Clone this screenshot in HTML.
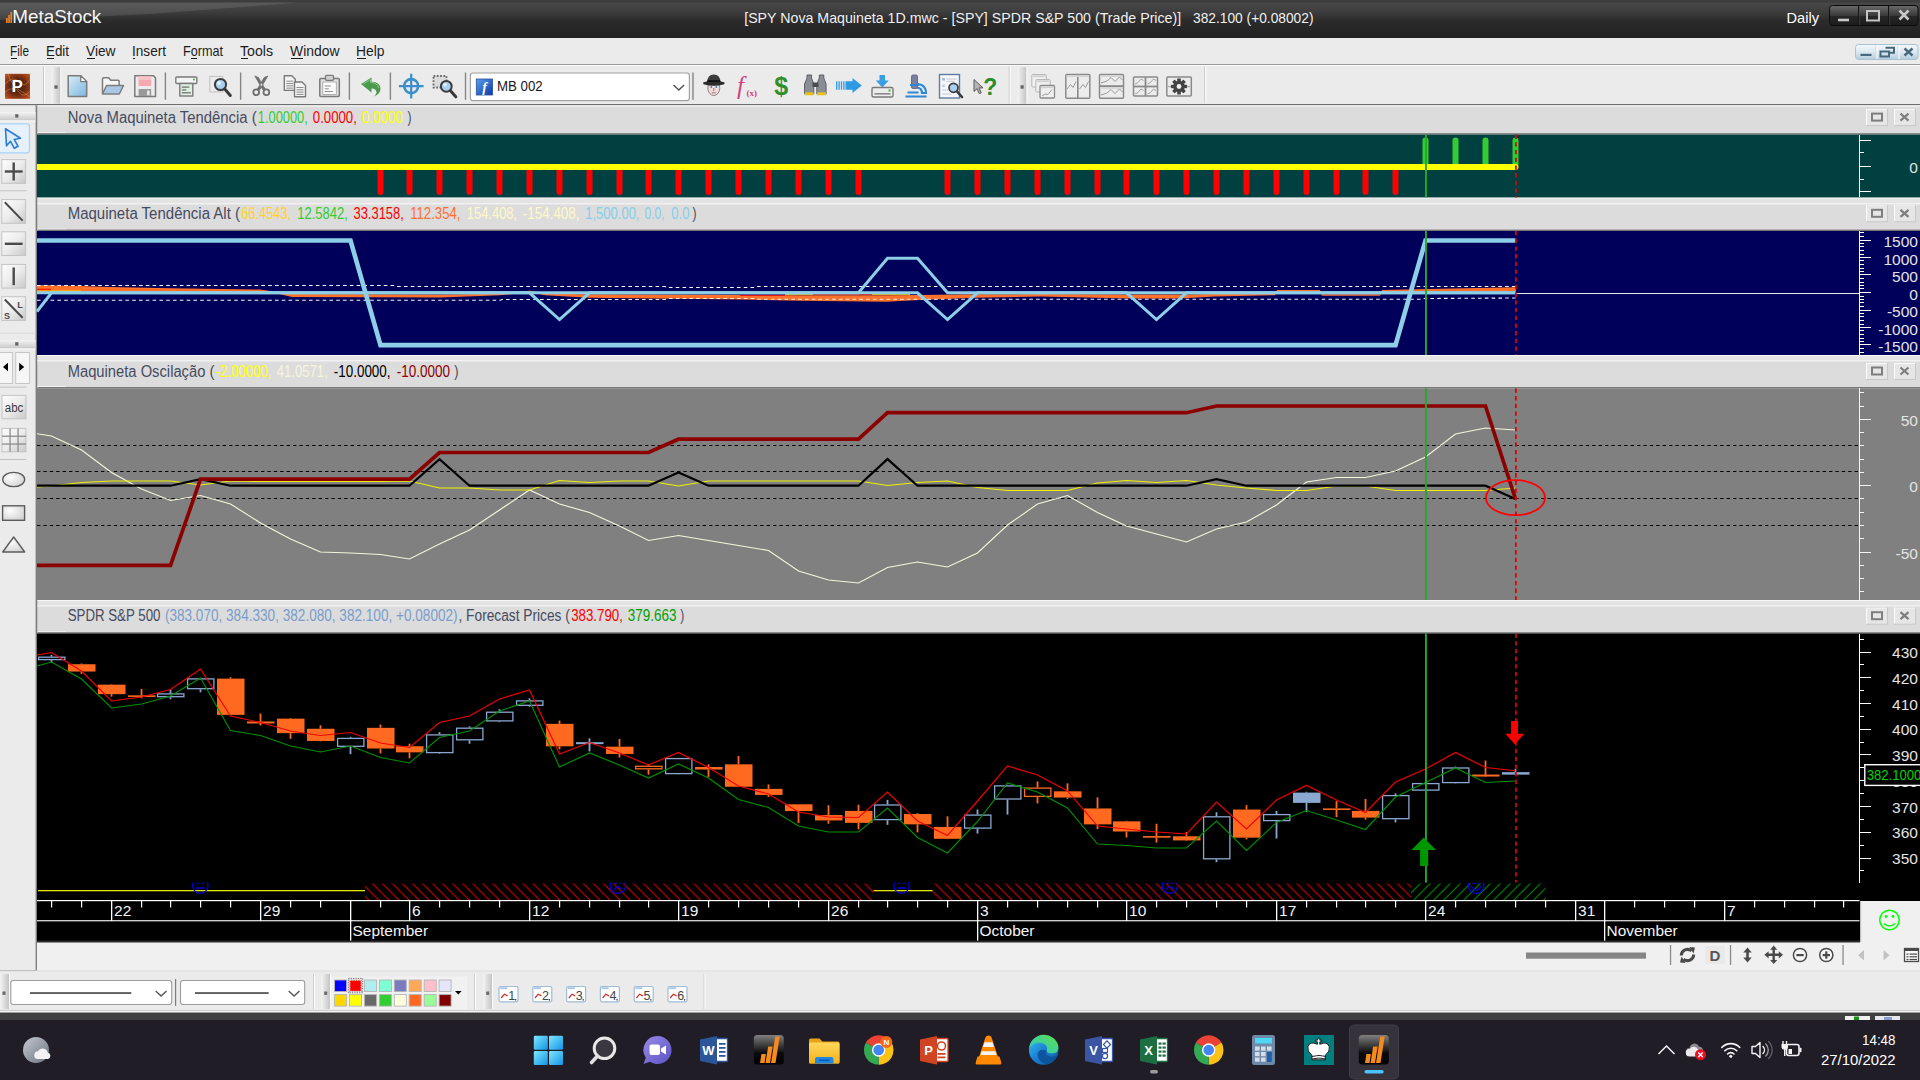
<!DOCTYPE html><html lang="en"><head><meta charset="utf-8"><title>MetaStock</title><style>html,body{margin:0;padding:0;background:#f0f0f0;overflow:hidden}svg{display:block;position:absolute;left:0;top:0}text{font-family:"Liberation Sans",sans-serif;white-space:pre}.ce{shape-rendering:crispEdges}</style></head><body><svg width="1920" height="1080" viewBox="0 0 1920 1080"><defs><linearGradient id="gTitle" x1="0" y1="0" x2="0" y2="1"><stop offset="0" stop-color="#4b4b4b"/><stop offset="0.3" stop-color="#3e3e3e"/><stop offset="0.55" stop-color="#2b2b2b"/><stop offset="1" stop-color="#222222"/></linearGradient><linearGradient id="gWB" x1="0" y1="0" x2="0" y2="1"><stop offset="0" stop-color="#6a6a6a"/><stop offset="0.5" stop-color="#3a3a3a"/><stop offset="0.55" stop-color="#262626"/><stop offset="1" stop-color="#1c1c1c"/></linearGradient><linearGradient id="gMDI" x1="0" y1="0" x2="0" y2="1"><stop offset="0" stop-color="#f4f8fb"/><stop offset="0.5" stop-color="#dde8f0"/><stop offset="1" stop-color="#b4ccdc"/></linearGradient><linearGradient id="gGrip" x1="0" y1="0" x2="1" y2="0"><stop offset="0" stop-color="#f4f4f4"/><stop offset="1" stop-color="#c4c4c4"/></linearGradient><linearGradient id="gGripV" x1="0" y1="0" x2="0" y2="1"><stop offset="0" stop-color="#f4f4f4"/><stop offset="1" stop-color="#c8c8c8"/></linearGradient><linearGradient id="gBtn" x1="0" y1="0" x2="0" y2="1"><stop offset="0" stop-color="#fafafa"/><stop offset="1" stop-color="#d8d8d8"/></linearGradient><linearGradient id="gDoc" x1="0" y1="0" x2="1" y2="1"><stop offset="0" stop-color="#d8ecf8"/><stop offset="1" stop-color="#7cb8e0"/></linearGradient><radialGradient id="gP" cx="0.5" cy="0.5" r="0.75"><stop offset="0" stop-color="#3a1a10"/><stop offset="0.45" stop-color="#6a2810"/><stop offset="0.8" stop-color="#b04a1c"/><stop offset="1" stop-color="#d8742c"/></radialGradient><pattern id="hRed" width="10.05" height="10.05" patternUnits="userSpaceOnUse" patternTransform="translate(1.3 0)"><path d="M-1,-1 L11,11 M-1,9 L1,11 M9,-1 L11,1" stroke="#e00000" stroke-width="1.05"/></pattern><pattern id="hGrn" width="10" height="10" patternUnits="userSpaceOnUse" patternTransform="translate(3.8 0)"><path d="M-1,11 L11,-1 M-1,1 L1,-1 M9,11 L11,9" stroke="#008c00" stroke-width="1.1"/></pattern></defs><rect x="0" y="0" width="1920" height="1080" fill="#f0f0f0" /><rect x="0" y="0" width="1920" height="38" fill="url(#gTitle)" /><rect x="0" y="0" width="1920" height="2.6" fill="#3d3d3d" /><polygon points="0,2.6 300,2.6 150,14 60,18.500 0,20" fill="#ffffff" opacity="0.10"/><rect x="6" y="18" width="1.7" height="5" fill="#f08020" /><rect x="8.2" y="15" width="1.7" height="8" fill="#f08020" /><rect x="10.4" y="12" width="1.7" height="11" fill="#f08020" /><text x="12.3" y="22.9" font-size="19" fill="#f6f6f6" textLength="89" lengthAdjust="spacingAndGlyphs" >MetaStock</text><text x="744.2" y="22.8" font-size="15" fill="#f0f0f0" textLength="437" lengthAdjust="spacingAndGlyphs" >[SPY Nova Maquineta 1D.mwc - [SPY] SPDR S&amp;P 500 (Trade Price)]</text><text x="1193" y="22.8" font-size="15" fill="#f0f0f0" textLength="120.5" lengthAdjust="spacingAndGlyphs" >382.100 (+0.08002)</text><text x="1786.5" y="22.5" font-size="15" fill="#ffffff" textLength="32.5" lengthAdjust="spacingAndGlyphs" >Daily</text><rect x="1829.5" y="5.5" width="88.5" height="20" rx="3" fill="url(#gWB)" stroke="#0c0c0c"/><line x1="1858.5" y1="6" x2="1858.5" y2="25" stroke="#141414" stroke-width="1" /><line x1="1859.5" y1="6" x2="1859.5" y2="25" stroke="#4a4a4a" stroke-width="1" opacity="0.6"/><line x1="1888.5" y1="6" x2="1888.5" y2="25" stroke="#141414" stroke-width="1" /><line x1="1889.5" y1="6" x2="1889.5" y2="25" stroke="#4a4a4a" stroke-width="1" opacity="0.6"/><rect x="1838" y="18.7" width="11" height="2.6" fill="#c8c8c8" /><rect x="1867" y="11" width="12" height="9.5" fill="none" stroke="#c4c4c4" stroke-width="2"/><path d="M1899.5,10.5 L1908.5,19.5 M1908.5,10.5 L1899.5,19.5" stroke="#c8c8c8" stroke-width="2.6"/><rect x="0" y="38" width="1920" height="26" fill="#ebebeb" /><rect x="0" y="64" width="1920" height="1" fill="#9a9a9a" class="ce"/><rect x="0" y="65" width="1920" height="1" fill="#fafafa" class="ce"/><text x="10" y="56" font-size="15" fill="#1c1c1c" textLength="19" lengthAdjust="spacingAndGlyphs" >File</text><rect x="10.5" y="58" width="6.20181" height="1" fill="#1c1c1c" class="ce"/><text x="46" y="56" font-size="15" fill="#1c1c1c" textLength="23" lengthAdjust="spacingAndGlyphs" >Edit</text><rect x="46.5" y="58" width="7.89964" height="1" fill="#1c1c1c" class="ce"/><text x="86" y="56" font-size="15" fill="#1c1c1c" textLength="29.5" lengthAdjust="spacingAndGlyphs" >View</text><rect x="86.5" y="58" width="8.15172" height="1" fill="#1c1c1c" class="ce"/><text x="132" y="56" font-size="15" fill="#1c1c1c" textLength="34" lengthAdjust="spacingAndGlyphs" >Insert</text><rect x="132.5" y="58" width="2.77935" height="1" fill="#1c1c1c" class="ce"/><text x="183" y="56" font-size="15" fill="#1c1c1c" textLength="40" lengthAdjust="spacingAndGlyphs" >Format</text><rect x="191.208" y="58" width="6.02401" height="1" fill="#1c1c1c" class="ce"/><text x="240" y="56" font-size="15" fill="#1c1c1c" textLength="33" lengthAdjust="spacingAndGlyphs" >Tools</text><rect x="240.5" y="58" width="7.62918" height="1" fill="#1c1c1c" class="ce"/><text x="290" y="56" font-size="15" fill="#1c1c1c" textLength="49.5" lengthAdjust="spacingAndGlyphs" >Window</text><rect x="290.5" y="58" width="12.1362" height="1" fill="#1c1c1c" class="ce"/><text x="356" y="56" font-size="15" fill="#1c1c1c" textLength="28.5" lengthAdjust="spacingAndGlyphs" >Help</text><rect x="356.5" y="58" width="9.00532" height="1" fill="#1c1c1c" class="ce"/><rect x="1855.5" y="44.5" width="62.5" height="15" rx="3" fill="url(#gMDI)" stroke="#a9c3d4"/><line x1="1876" y1="45" x2="1876" y2="59" stroke="#c5d6e2" stroke-width="1" /><line x1="1877" y1="45" x2="1877" y2="59" stroke="#ffffff" stroke-width="1" /><line x1="1898" y1="45" x2="1898" y2="59" stroke="#c5d6e2" stroke-width="1" /><line x1="1899" y1="45" x2="1899" y2="59" stroke="#ffffff" stroke-width="1" /><rect x="1860.5" y="53.8" width="11" height="2.2" fill="#47697e" /><path d="M1885.5,47.7 h8.5 v5 h-4 M1880.5,51.5 h8.5 v5 h-8.5 z" fill="none" stroke="#47697e" stroke-width="2"/><path d="M1904.5,48.5 L1912.5,55.5 M1912.5,48.5 L1904.5,55.5" stroke="#47697e" stroke-width="2.4"/><rect x="0" y="66" width="1920" height="38" fill="#ebebeb" /><rect x="0" y="104" width="1920" height="1.4" fill="#6e6e6e" /><rect x="5" y="73.800" width="25" height="25" fill="url(#gP)"/><path d="M5,84 q8,-9 14,-2 t11,-3 M5,92 q9,-7 14,0 t11,-1 M8,73.800 q3,12 14,18 t8,6" fill="none" stroke="#f0a060" stroke-width="0.800" opacity="0.550"/><text x="17.8" y="92.3" font-size="17" fill="#201008" text-anchor="middle" font-weight="bold" opacity="0.6">P</text><text x="17.2" y="91.5" font-size="17" fill="#ffffff" text-anchor="middle" font-weight="bold">P</text><rect x="43" y="66.5" width="1" height="37" fill="#c8c8c8" /><rect x="44" y="66.5" width="1" height="37" fill="#fcfcfc" /><rect x="51.4" y="67" width="9" height="36.800" fill="url(#gGrip)"/><rect x="60.4" y="67" width="1" height="36.8" fill="#fbfbfb" /><rect x="54.4" y="85.3" width="3.2" height="3.4" fill="#666666" /><path d="M68.200,75.700 h12.500 l6,6 v14.800 h-18.500 z" fill="url(#gDoc)" stroke="#7a7a7a" stroke-width="1.500" stroke-linejoin="round"/><path d="M80.700,75.700 v6 h6 z" fill="#fafafa" stroke="#7a7a7a" stroke-width="1.200" stroke-linejoin="round"/><path d="M102.500,93.500 v-14.500 q0,-1.200 1.200,-1.200 h5 l2,2.500 h7.300 q1.200,0 1.200,1.200 v4" fill="#f6f6f6" stroke="#7d7d7d" stroke-width="1.500" stroke-linejoin="round"/><path d="M102.500,94 l4,-8.500 h17 l-4.200,8.500 z" fill="#a9c8e6" stroke="#7d7d7d" stroke-width="1.500" stroke-linejoin="round"/><path d="M134.800,75.700 h18.700 l2,2 v18.800 h-20.700 z" fill="#ececec" stroke="#7a7a7a" stroke-width="1.500" stroke-linejoin="round"/><rect x="138.6" y="76.4" width="12.6" height="9.6" fill="#f6a8b0" /><rect x="138.6" y="76.4" width="12.6" height="3.5" fill="#f9c4c8" /><rect x="138.6" y="89" width="12.6" height="7" fill="#9a9a9a" /><rect x="147" y="90.5" width="2.6" height="4.8" fill="#e8e8e8" /><rect x="164.7" y="72.5" width="1.4" height="27.3" fill="#858585" /><rect x="175.800" y="77" width="21" height="6.500" rx="1" fill="#f4f4f4" stroke="#7a7a7a" stroke-width="1.400"/><rect x="193" y="78.6" width="1.8" height="1.8" fill="#46b446" /><rect x="179.800" y="83.500" width="13" height="12.500" fill="#ddf0e0" stroke="#7a7a7a" stroke-width="1.400"/><rect x="181.8" y="86.5" width="7.5" height="1.2" fill="#6a6a6a" /><rect x="181.8" y="89.3" width="4.5" height="1.2" fill="#6a6a6a" /><rect x="181.8" y="92.2" width="9" height="1.2" fill="#6a6a6a" /><rect x="209.800" y="76.400" width="13" height="15.500" fill="#ececec" stroke="#c0c0c0" stroke-width="1"/><circle cx="220.500" cy="84.500" r="5.600" fill="#a8d0f0" stroke="#3c3c3c" stroke-width="2"/><circle cx="219" cy="83" r="2" fill="#e4f2fc"/><path d="M224.800,89 l5.500,6.500" stroke="#3a3a3a" stroke-width="3" stroke-linecap="round"/><rect x="239.9" y="72.5" width="1.4" height="27.3" fill="#858585" /><path d="M254.800,76 l3.600,1.500 l6.800,11.500 l-2.200,1 z M267.800,76 l-3.600,1.500 l-6.800,11.500 l2.200,1 z" fill="#707070" stroke="#707070" stroke-width="0.800" stroke-linejoin="round"/><circle cx="256.200" cy="92.300" r="2.900" fill="none" stroke="#6e6e6e" stroke-width="1.800"/><circle cx="266.400" cy="92.300" r="2.900" fill="none" stroke="#6e6e6e" stroke-width="1.800"/><path d="M284.3,75.7 h7.500 l3.500,3.500 v11.200 h-11 z" fill="#f4f4f4" stroke="#7a7a7a" stroke-width="1.400" stroke-linejoin="round"/><rect x="286.3" y="80.7" width="7" height="1" fill="#8c8c8c" /><rect x="286.3" y="83" width="7" height="1" fill="#8c8c8c" /><rect x="286.3" y="85.3" width="7" height="1" fill="#8c8c8c" /><rect x="286.3" y="87.6" width="7" height="1" fill="#8c8c8c" /><path d="M294.5,82 h7.500 l3.500,3.500 v11.200 h-11 z" fill="#f4f4f4" stroke="#7a7a7a" stroke-width="1.400" stroke-linejoin="round"/><rect x="296.5" y="87" width="7" height="1" fill="#8c8c8c" /><rect x="296.5" y="89.3" width="7" height="1" fill="#8c8c8c" /><rect x="296.5" y="91.6" width="7" height="1" fill="#8c8c8c" /><rect x="296.5" y="93.9" width="7" height="1" fill="#8c8c8c" /><rect x="319.800" y="78.500" width="19.500" height="18" rx="1" fill="#e2e2e2" stroke="#7a7a7a" stroke-width="1.500"/><rect x="322.800" y="82" width="13.500" height="12.500" fill="#fbfbfb" stroke="#a0a0a0" stroke-width="0.800"/><rect x="325.500" y="75.300" width="8" height="5" rx="1" fill="#d0d0d0" stroke="#7a7a7a" stroke-width="1.300"/><rect x="324.8" y="85.5" width="6" height="1" fill="#8c8c8c" /><rect x="324.8" y="88.3" width="4" height="1" fill="#8c8c8c" /><rect x="324.8" y="91" width="8" height="1" fill="#8c8c8c" /><rect x="348.7" y="72.5" width="1.4" height="27.3" fill="#858585" /><path d="M361,84 l10.500,-6.500 v4.200 q9,0.300 9,7.300 q0,5 -6.500,7.500 q3.200,-3 2.200,-5.500 q-1,-2.800 -4.700,-2.600 v4 z" fill="#4c9a4c"/><path d="M363.500,83.800 l7,-4.200 v2.800 q7.500,0.500 8,5.500" fill="none" stroke="#8cc88c" stroke-width="1"/><rect x="389.7" y="72.5" width="1.4" height="27.3" fill="#858585" /><circle cx="411.200" cy="86.100" r="7" fill="#f1e6ee" stroke="#3b8fc9" stroke-width="2.600"/><path d="M398.900,86.100 h24.700 M411.200,73.800 v24.700" stroke="#3b8fc9" stroke-width="2.200"/><rect x="433.500" y="76" width="13" height="11.500" fill="#dcdcdc" stroke="#6c6c6c" stroke-width="1.800" stroke-dasharray="1.800,1.500"/><circle cx="446.300" cy="86.300" r="5.400" fill="#a8d0f0" stroke="#3c3c3c" stroke-width="2"/><circle cx="445" cy="84.800" r="1.800" fill="#e4f2fc"/><path d="M450.500,90.800 l5.300,6" stroke="#3a3a3a" stroke-width="3" stroke-linecap="round"/><rect x="464.8" y="72.5" width="1.4" height="27.3" fill="#858585" /><rect x="470.400" y="73" width="219" height="27.600" rx="2.500" fill="#ffffff" stroke="#a2a2a2" stroke-width="1.200"/><linearGradient id="gF" x1="0" y1="0" x2="1" y2="1"><stop offset="0" stop-color="#5aa0ea"/><stop offset="1" stop-color="#0c38a8"/></linearGradient><rect x="476.300" y="79" width="16.300" height="16" fill="url(#gF)" stroke="#2a50a0" stroke-width="0.800"/><text x="484.5" y="92" font-size="14" fill="#ffffff" text-anchor="middle" font-style="italic" font-weight="bold" style="font-family:Liberation Serif,serif">f</text><text x="497" y="91.2" font-size="15" fill="#1a1a1a" textLength="45.7" lengthAdjust="spacingAndGlyphs" >MB 002</text><path d="M673.500,85 l5.300,5 l5.300,-5" fill="none" stroke="#505050" stroke-width="1.400"/><rect x="692.3" y="72.5" width="1.4" height="27.3" fill="#858585" /><ellipse cx="713.800" cy="88" rx="6" ry="7.500" fill="#f0dcd8" stroke="#7a6a6a" stroke-width="0.800"/><path d="M703,82.500 q10.800,-4 21.700,0 l-0.500,1.800 q-10.300,3 -20.700,0 z" fill="#2a2a2a"/><path d="M707.300,82 q0,-7.500 6.500,-7.500 q6.500,0 6.500,7.500 z" fill="#3c3c3c"/><rect x="707.3" y="80.2" width="13" height="1.8" fill="#101010" /><circle cx="711.300" cy="87" r="0.900" fill="#3c78c8"/><circle cx="716.300" cy="87" r="0.900" fill="#3c78c8"/><path d="M713.800,88 v3 M711.800,92.800 h4" stroke="#806060" stroke-width="0.800"/><text x="737" y="94" font-size="25" fill="#d2407e" font-style="italic" style="font-family:Liberation Serif,serif">f</text><text x="746.5" y="95.5" font-size="9" fill="#d2407e" font-weight="bold" style="font-family:Liberation Serif,serif">(x)</text><text x="781.3" y="95.3" font-size="25" fill="#2f8f2f" text-anchor="middle" font-weight="bold">$</text><path d="M804.5,94 v-10 l2.500,-6 v-3 h4.500 v3 l2.300,6 v10 z" fill="#8a8e92" stroke="#55585c" stroke-width="0.900"/><rect x="804.8" y="92.3" width="8.8" height="3" fill="#e8c020" /><path d="M816.8,94 v-10 l2.500,-6 v-3 h4.500 v3 l2.300,6 v10 z" fill="#8a8e92" stroke="#55585c" stroke-width="0.900"/><rect x="817.1" y="92.3" width="8.8" height="3" fill="#e8c020" /><rect x="812.5" y="82.5" width="6" height="4.5" fill="#4a4c50" /><rect x="836" y="81.3" width="1.4" height="8.4" fill="#3ca0e4" /><rect x="838.4" y="81.3" width="1.4" height="8.4" fill="#3ca0e4" /><rect x="840.8" y="81.3" width="1.4" height="8.4" fill="#3ca0e4" /><rect x="843.2" y="81.3" width="1.4" height="8.4" fill="#3ca0e4" /><path d="M845.500,81.300 h7 v-3.300 l9.300,7.500 l-9.300,7.500 v-3.300 h-7 z" fill="#2f9ae2"/><path d="M879.500,75 h5.500 v5.500 h3.800 l-6.500,7 l-6.500,-7 h3.700 z" fill="#3a9ee4"/><rect x="872" y="87.500" width="21" height="9.500" rx="1.500" fill="#ececec" stroke="#7a7a7a" stroke-width="1.400"/><rect x="874.5" y="93" width="16" height="1.6" fill="#8a8a8a" /><rect x="888.5" y="89.5" width="2" height="2" fill="#46b446" /><rect x="911.500" y="75" width="6" height="13.500" rx="1.500" fill="#7a80a0" stroke="#565a7a" stroke-width="0.800"/><path d="M910,85 h9 M918,84 q8,1 8,9 h-4 q0,-5 -5,-5.500" fill="none" stroke="#2f86d6" stroke-width="2.200"/><path d="M907.500,92.500 h11 M905.500,96.500 h21" stroke="#2f86d6" stroke-width="2.200"/><rect x="939.500" y="74.500" width="20" height="23.500" fill="#f6f8fb" stroke="#5c7ea6" stroke-width="1.400"/><rect x="942" y="78" width="3" height="2.6" fill="#a8bcd8" /><rect x="946.5" y="78.5" width="10.5" height="1" fill="#c0c8d4" /><rect x="946.5" y="80.8" width="8" height="1" fill="#c0c8d4" /><rect x="942" y="84.5" width="3" height="2.6" fill="#c8d0dc" /><rect x="942" y="89.5" width="6" height="1" fill="#c0c8d4" /><rect x="942" y="93.5" width="9" height="1" fill="#c0c8d4" /><circle cx="953.500" cy="87.800" r="4.500" fill="#a8d0f0" stroke="#3c3c3c" stroke-width="1.700"/><path d="M957,91.500 l5,5.500" stroke="#3a3a3a" stroke-width="2.600" stroke-linecap="round"/><path d="M974,79.500 v12 l3,-2.800 l2.300,5 l2,-1 l-2.300,-4.800 h4 z" fill="#b4b4b4" stroke="#5a5a5a" stroke-width="1"/><text x="990.3" y="95" font-size="23" fill="#2a8c2a" text-anchor="middle" font-weight="bold">?</text><rect x="1008.7" y="66.5" width="1" height="37" fill="#c8c8c8" /><rect x="1009.7" y="66.5" width="1" height="37" fill="#fcfcfc" /><rect x="1017.5" y="67" width="9" height="36.800" fill="url(#gGrip)"/><rect x="1026.5" y="67" width="1" height="36.8" fill="#fbfbfb" /><rect x="1020.5" y="85.3" width="3.2" height="3.4" fill="#666666" /><rect x="1031.8" y="74.5" width="14.500" height="12.500" rx="1" fill="#f0f0f0" stroke="#b8b8b8" stroke-width="1"/><rect x="1032.6" y="75.3" width="13" height="1.8" fill="#d0d0d0" /><rect x="1035.8" y="79.5" width="14.500" height="12.500" rx="1" fill="#f0f0f0" stroke="#b8b8b8" stroke-width="1"/><rect x="1036.6" y="80.3" width="13" height="1.8" fill="#d0d0d0" /><rect x="1040" y="85.5" width="14.500" height="12.500" rx="1" fill="#f0f0f0" stroke="#8a8a8a" stroke-width="1.3"/><rect x="1040.8" y="86.3" width="13" height="1.8" fill="#d0d0d0" /><path d="M1042,96 l3,-2 l3,0.500 l4,-5" fill="none" stroke="#9a9a9a" stroke-width="1"/><rect x="1065.800" y="74.500" width="24" height="23.800" rx="1" fill="#ececec" stroke="#8a8a8a" stroke-width="1.500"/><rect x="1077" y="74.5" width="1.6" height="23.8" fill="#8a8a8a" /><rect x="1066.5" y="75.2" width="22.5" height="1.8" fill="#d4d4d4" /><path d="M1067,89 l3.500,-4.500 l2.500,3 l3,-6 M1079.500,89 l3.500,-4.500 l2.500,3 l3,-6" fill="none" stroke="#9a9a9a" stroke-width="1"/><rect x="1099.500" y="74.500" width="24" height="23.800" rx="1" fill="#ececec" stroke="#8a8a8a" stroke-width="1.500"/><rect x="1099.5" y="85.2" width="24" height="1.8" fill="#8a8a8a" /><rect x="1100.2" y="75.2" width="22.5" height="1.8" fill="#d4d4d4" /><rect x="1100.2" y="87.2" width="22.5" height="1.6" fill="#d4d4d4" /><path d="M1101,83 l6,-2 l4,-3.500 l4,4 l4.500,-4.500 l3,3 M1101,95 l6,-2 l4,-3.500 l4,4 l4.500,-4.500 l3,3" fill="none" stroke="#9a9a9a" stroke-width="1"/><rect x="1133.500" y="77" width="24" height="19" rx="1" fill="#ececec" stroke="#8a8a8a" stroke-width="1.500"/><rect x="1144.6" y="77" width="1.8" height="19" fill="#8a8a8a" /><rect x="1133.5" y="85.6" width="24" height="1.8" fill="#8a8a8a" /><path d="M1135,84 l3,-1.500 l3,-3.500 l2.500,1.500 M1147.500,84 l3,-1.500 l3,-3.500 l2.500,1.500 M1135,94 l3,-1.500 l3,-3.500 l2.500,1.500 M1147.500,94 l3,-1.500 l3,-3.500 l2.500,1.500" fill="none" stroke="#a4a4a4" stroke-width="1"/><rect x="1166.800" y="77" width="24.500" height="19" rx="1" fill="#ececec" stroke="#8a8a8a" stroke-width="1.500"/><path d="M1168,86.500 h22" stroke="#b0b0b0" stroke-width="1.400"/><circle cx="1179" cy="86.500" r="5.800" fill="#444444"/><rect x="1177.400" y="78.700" width="3.200" height="15.600" fill="#444444" transform="rotate(0 1179 86.500)"/><rect x="1177.400" y="78.700" width="3.200" height="15.600" fill="#444444" transform="rotate(45 1179 86.500)"/><rect x="1177.400" y="78.700" width="3.200" height="15.600" fill="#444444" transform="rotate(90 1179 86.500)"/><rect x="1177.400" y="78.700" width="3.200" height="15.600" fill="#444444" transform="rotate(135 1179 86.500)"/><rect x="1177.400" y="78.700" width="3.200" height="15.600" fill="#444444" transform="rotate(180 1179 86.500)"/><rect x="1177.400" y="78.700" width="3.200" height="15.600" fill="#444444" transform="rotate(225 1179 86.500)"/><rect x="1177.400" y="78.700" width="3.200" height="15.600" fill="#444444" transform="rotate(270 1179 86.500)"/><rect x="1177.400" y="78.700" width="3.200" height="15.600" fill="#444444" transform="rotate(315 1179 86.500)"/><circle cx="1179" cy="86.500" r="2.400" fill="#f2f2f2"/><rect x="1204.2" y="66.5" width="1" height="37" fill="#c8c8c8" /><rect x="1205.2" y="66.5" width="1" height="37" fill="#fcfcfc" /><rect x="0" y="105.4" width="36" height="865" fill="#ebebeb" /><rect x="35.6" y="105.4" width="2" height="865" fill="#7e7e7e" /><rect x="0" y="112" width="35.500" height="8.500" fill="url(#gGripV)"/><rect x="0" y="120.5" width="35.5" height="1" fill="#fbfbfb" /><rect x="15.2" y="114.2" width="3.2" height="3.4" fill="#666666" /><rect x="-2" y="123.800" width="31.500" height="29" rx="2.500" fill="#e6f1fb" stroke="#a9d3f7" stroke-width="1.300"/><path d="M5.500,128.800 l15,9.500 l-6.200,1.200 l3.800,6.800 l-3.800,2 l-3.800,-7 l-4,4.500 z" fill="#dcebf8" stroke="#2c7cd2" stroke-width="1.600" stroke-linejoin="round"/><linearGradient id="gb1596" x1="0" y1="0" x2="1" y2="1"><stop offset="0" stop-color="#fdfdfd"/><stop offset="0.5" stop-color="#ececec"/><stop offset="1" stop-color="#c9c9c9"/></linearGradient><rect x="1.8" y="159.6" width="23.8" height="23.7" fill="url(#gb1596)" stroke="#c4c4c4" stroke-width="1"/><rect x="4.8" y="170.3" width="17.8" height="2.4" fill="#4a4a4a" /><rect x="12.5" y="162.5" width="2.4" height="18" fill="#4a4a4a" /><rect x="0" y="190.3" width="26.5" height="1" fill="#c4c4c4" /><linearGradient id="gb1996" x1="0" y1="0" x2="1" y2="1"><stop offset="0" stop-color="#fdfdfd"/><stop offset="0.5" stop-color="#ececec"/><stop offset="1" stop-color="#c9c9c9"/></linearGradient><rect x="1.8" y="199.6" width="23.8" height="23.7" fill="url(#gb1996)" stroke="#c4c4c4" stroke-width="1"/><path d="M4.800,202.300 l17.800,18.300" stroke="#4a4a4a" stroke-width="2"/><linearGradient id="gb2318" x1="0" y1="0" x2="1" y2="1"><stop offset="0" stop-color="#fdfdfd"/><stop offset="0.5" stop-color="#ececec"/><stop offset="1" stop-color="#c9c9c9"/></linearGradient><rect x="1.8" y="231.8" width="23.8" height="23.7" fill="url(#gb2318)" stroke="#c4c4c4" stroke-width="1"/><rect x="4.8" y="242.6" width="17.8" height="2.4" fill="#4a4a4a" /><linearGradient id="gb2644" x1="0" y1="0" x2="1" y2="1"><stop offset="0" stop-color="#fdfdfd"/><stop offset="0.5" stop-color="#ececec"/><stop offset="1" stop-color="#c9c9c9"/></linearGradient><rect x="1.8" y="264.4" width="23.8" height="23.7" fill="url(#gb2644)" stroke="#c4c4c4" stroke-width="1"/><rect x="12.5" y="267.5" width="2.4" height="17.7" fill="#4a4a4a" /><linearGradient id="gb2967" x1="0" y1="0" x2="1" y2="1"><stop offset="0" stop-color="#fdfdfd"/><stop offset="0.5" stop-color="#ececec"/><stop offset="1" stop-color="#c9c9c9"/></linearGradient><rect x="1.8" y="296.7" width="23.8" height="23.7" fill="url(#gb2967)" stroke="#c4c4c4" stroke-width="1"/><path d="M4.800,299.500 l17.800,18.300" stroke="#4a4a4a" stroke-width="2"/><text x="17.3" y="307.8" font-size="9" fill="#4a4a4a" font-weight="bold">L</text><text x="4" y="318.5" font-size="9" fill="#4a4a4a" font-weight="bold">S</text><rect x="0" y="332.8" width="35.5" height="1" fill="#dcdcdc" /><rect x="0" y="340" width="35.500" height="8.500" fill="url(#gGripV)"/><rect x="0" y="348.5" width="35.5" height="1" fill="#fbfbfb" /><rect x="15.2" y="342.2" width="3.2" height="3.4" fill="#666666" /><rect x="-1" y="352.500" width="13.5" height="31" fill="#f6f6f6" stroke="#c6c6c6" stroke-width="1"/><rect x="15.7" y="352.500" width="13.9" height="31" fill="#f6f6f6" stroke="#c6c6c6" stroke-width="1"/><path d="M8,362.800 v8.400 l-5,-4.200 z M19.200,362.800 v8.400 l5,-4.200 z" fill="#000"/><rect x="0" y="386.6" width="26.5" height="1" fill="#c4c4c4" /><linearGradient id="gb3954" x1="0" y1="0" x2="1" y2="1"><stop offset="0" stop-color="#fdfdfd"/><stop offset="0.5" stop-color="#ececec"/><stop offset="1" stop-color="#c9c9c9"/></linearGradient><rect x="2" y="395.4" width="24" height="23.4" fill="url(#gb3954)" stroke="#c4c4c4" stroke-width="1"/><text x="14" y="411.5" font-size="12.5" fill="#3a3a3a" textLength="18.5" lengthAdjust="spacingAndGlyphs" text-anchor="middle" >abc</text><linearGradient id="gb4284" x1="0" y1="0" x2="1" y2="1"><stop offset="0" stop-color="#fdfdfd"/><stop offset="0.5" stop-color="#ececec"/><stop offset="1" stop-color="#c9c9c9"/></linearGradient><rect x="2" y="428.4" width="24" height="23.4" fill="url(#gb4284)" stroke="#c4c4c4" stroke-width="1"/><rect x="9.4" y="428.4" width="1.3" height="23.4" fill="#8e8e8e" /><rect x="2" y="435.6" width="24" height="1.3" fill="#8e8e8e" /><rect x="17.4" y="428.4" width="1.3" height="23.4" fill="#8e8e8e" /><rect x="2" y="443.4" width="24" height="1.3" fill="#8e8e8e" /><rect x="0" y="459" width="26.5" height="1" fill="#c4c4c4" /><radialGradient id="gEl" cx="0.35" cy="0.35" r="0.8"><stop offset="0" stop-color="#fdfdfd"/><stop offset="1" stop-color="#cfcfcf"/></radialGradient><ellipse cx="13.700" cy="479.500" rx="11" ry="7.200" fill="url(#gEl)" stroke="#5c5c5c" stroke-width="1.300"/><rect x="2.600" y="505.800" width="22" height="14.500" fill="url(#gEl)" stroke="#5c5c5c" stroke-width="1.400"/><path d="M13.700,537 l11,15 h-22 z" fill="url(#gEl)" stroke="#5c5c5c" stroke-width="1.400" stroke-linejoin="round"/><rect x="37.5" y="105.4" width="1883" height="29.2" fill="#dcdcdc" /><rect x="37.5" y="105.4" width="1883" height="1.2" fill="#f6f6f6" /><rect x="37.5" y="132.3" width="28" height="1" fill="#f6f6f6" /><rect x="37.5" y="133.2" width="1883" height="1.4" fill="#777777" /><text x="67.7" y="122.6" font-size="16" fill="#464b60" textLength="189" lengthAdjust="spacingAndGlyphs" >Nova Maquineta Tendência (</text><text x="257.8" y="122.6" font-size="16" fill="#32cd32" textLength="50" lengthAdjust="spacingAndGlyphs" >1.00000,</text><text x="312.8" y="122.6" font-size="16" fill="#ff0000" textLength="44" lengthAdjust="spacingAndGlyphs" >0.0000,</text><text x="361.8" y="122.6" font-size="16" fill="#ffff00" textLength="41" lengthAdjust="spacingAndGlyphs" >0.0000</text><text x="407.5" y="122.6" font-size="16" fill="#464b60" textLength="4" lengthAdjust="spacingAndGlyphs" >)</text><rect x="1866.5" y="109.6" width="21" height="16" fill="#e6e6e6" stroke="#c8c8c8"/><path d="M1866,109.6 h21 M1866.5,109.1 v16" stroke="#fbfbfb" fill="none"/><rect x="1894.5" y="109.6" width="21" height="16" fill="#e6e6e6" stroke="#c8c8c8"/><path d="M1894,109.6 h21 M1894.5,109.1 v16" stroke="#fbfbfb" fill="none"/><rect x="1872" y="113.6" width="10" height="7" fill="none" stroke="#7e7e7e" stroke-width="2"/><path d="M1900.5,113.6 l8,7 M1908.5,113.6 l-8,7" stroke="#7e7e7e" stroke-width="2.2"/><rect x="37.5" y="197.4" width="1883" height="6.5" fill="#e4e4e4" /><rect x="37.5" y="197.4" width="1883" height="1" fill="#f8f8f8" /><rect x="37.5" y="203.2" width="1883" height="27.8" fill="#dcdcdc" /><rect x="37.5" y="203.2" width="1883" height="1.2" fill="#f6f6f6" /><rect x="37.5" y="228.7" width="28" height="1" fill="#f6f6f6" /><rect x="37.5" y="229.6" width="1883" height="1.4" fill="#777777" /><text x="67.7" y="218.8" font-size="16" fill="#464b60" textLength="172.3" lengthAdjust="spacingAndGlyphs" >Maquineta Tendência Alt (</text><text x="241.2" y="218.8" font-size="16" fill="#ffd428" textLength="50" lengthAdjust="spacingAndGlyphs" >66.4543,</text><text x="297.2" y="218.8" font-size="16" fill="#32cd32" textLength="50.7" lengthAdjust="spacingAndGlyphs" >12.5842,</text><text x="353.5" y="218.8" font-size="16" fill="#ff0000" textLength="50.3" lengthAdjust="spacingAndGlyphs" >33.3158,</text><text x="410.2" y="218.8" font-size="16" fill="#ff7030" textLength="50.3" lengthAdjust="spacingAndGlyphs" >112.354,</text><text x="466.8" y="218.8" font-size="16" fill="#fff8c8" textLength="50.3" lengthAdjust="spacingAndGlyphs" >154.408,</text><text x="522.8" y="218.8" font-size="16" fill="#fff8c8" textLength="56.7" lengthAdjust="spacingAndGlyphs" >-154.408,</text><text x="585.2" y="218.8" font-size="16" fill="#87ceeb" textLength="54.3" lengthAdjust="spacingAndGlyphs" >1,500.00,</text><text x="644.5" y="218.8" font-size="16" fill="#87ceeb" textLength="20" lengthAdjust="spacingAndGlyphs" >0.0,</text><text x="671.2" y="218.8" font-size="16" fill="#87ceeb" textLength="18.3" lengthAdjust="spacingAndGlyphs" >0.0</text><text x="692.5" y="218.8" font-size="16" fill="#464b60" textLength="4" lengthAdjust="spacingAndGlyphs" >)</text><rect x="1866.5" y="205.8" width="21" height="16" fill="#e6e6e6" stroke="#c8c8c8"/><path d="M1866,205.8 h21 M1866.5,205.3 v16" stroke="#fbfbfb" fill="none"/><rect x="1894.5" y="205.8" width="21" height="16" fill="#e6e6e6" stroke="#c8c8c8"/><path d="M1894,205.8 h21 M1894.5,205.3 v16" stroke="#fbfbfb" fill="none"/><rect x="1872" y="209.8" width="10" height="7" fill="none" stroke="#7e7e7e" stroke-width="2"/><path d="M1900.5,209.8 l8,7 M1908.5,209.8 l-8,7" stroke="#7e7e7e" stroke-width="2.2"/><rect x="37.5" y="355" width="1883" height="6" fill="#e4e4e4" /><rect x="37.5" y="355" width="1883" height="1" fill="#f8f8f8" /><rect x="37.5" y="360.2" width="1883" height="28.2" fill="#dcdcdc" /><rect x="37.5" y="360.2" width="1883" height="1.2" fill="#f6f6f6" /><rect x="37.5" y="386.1" width="28" height="1" fill="#f6f6f6" /><rect x="37.5" y="387" width="1883" height="1.4" fill="#777777" /><text x="67.7" y="376.5" font-size="16" fill="#464b60" textLength="146.7" lengthAdjust="spacingAndGlyphs" >Maquineta Oscilação (</text><text x="215.5" y="376.5" font-size="16" fill="#ffff00" textLength="55.7" lengthAdjust="spacingAndGlyphs" >-2.00000,</text><text x="276.8" y="376.5" font-size="16" fill="#f5f5dc" textLength="51" lengthAdjust="spacingAndGlyphs" >41.0571,</text><text x="333.8" y="376.5" font-size="16" fill="#000000" textLength="56.7" lengthAdjust="spacingAndGlyphs" >-10.0000,</text><text x="396.8" y="376.5" font-size="16" fill="#8b0000" textLength="53.3" lengthAdjust="spacingAndGlyphs" >-10.0000</text><text x="454.2" y="376.5" font-size="16" fill="#464b60" textLength="4.3" lengthAdjust="spacingAndGlyphs" >)</text><rect x="1866.5" y="363.5" width="21" height="16" fill="#e6e6e6" stroke="#c8c8c8"/><path d="M1866,363.5 h21 M1866.5,363 v16" stroke="#fbfbfb" fill="none"/><rect x="1894.5" y="363.5" width="21" height="16" fill="#e6e6e6" stroke="#c8c8c8"/><path d="M1894,363.5 h21 M1894.5,363 v16" stroke="#fbfbfb" fill="none"/><rect x="1872" y="367.5" width="10" height="7" fill="none" stroke="#7e7e7e" stroke-width="2"/><path d="M1900.5,367.5 l8,7 M1908.5,367.5 l-8,7" stroke="#7e7e7e" stroke-width="2.2"/><rect x="37.5" y="600" width="1883" height="6" fill="#e4e4e4" /><rect x="37.5" y="600" width="1883" height="1" fill="#f8f8f8" /><rect x="37.5" y="605.3" width="1883" height="28.3" fill="#dcdcdc" /><rect x="37.5" y="605.3" width="1883" height="1.2" fill="#f6f6f6" /><rect x="37.5" y="631.3" width="28" height="1" fill="#f6f6f6" /><rect x="37.5" y="632.2" width="1883" height="1.4" fill="#777777" /><text x="67.7" y="621.2" font-size="16" fill="#464b60" textLength="92.7" lengthAdjust="spacingAndGlyphs" >SPDR S&amp;P 500</text><text x="164.9" y="621.2" font-size="16" fill="#7a9ccc" textLength="292.7" lengthAdjust="spacingAndGlyphs" >(383.070, 384.330, 382.080, 382.100, +0.08002)</text><text x="458.5" y="621.2" font-size="16" fill="#464b60" textLength="111.3" lengthAdjust="spacingAndGlyphs" >, Forecast Prices (</text><text x="571.2" y="621.2" font-size="16" fill="#ff0000" textLength="51.7" lengthAdjust="spacingAndGlyphs" >383.790,</text><text x="627.8" y="621.2" font-size="16" fill="#00a000" textLength="48.7" lengthAdjust="spacingAndGlyphs" >379.663</text><text x="680.2" y="621.2" font-size="16" fill="#464b60" textLength="4" lengthAdjust="spacingAndGlyphs" >)</text><rect x="1866.5" y="608.2" width="21" height="16" fill="#e6e6e6" stroke="#c8c8c8"/><path d="M1866,608.2 h21 M1866.5,607.7 v16" stroke="#fbfbfb" fill="none"/><rect x="1894.5" y="608.2" width="21" height="16" fill="#e6e6e6" stroke="#c8c8c8"/><path d="M1894,608.2 h21 M1894.5,607.7 v16" stroke="#fbfbfb" fill="none"/><rect x="1872" y="612.2" width="10" height="7" fill="none" stroke="#7e7e7e" stroke-width="2"/><path d="M1900.5,612.2 l8,7 M1908.5,612.2 l-8,7" stroke="#7e7e7e" stroke-width="2.2"/><rect x="37" y="134.6" width="1883" height="62.8" fill="#004040" /><line x1="380.5" y1="170" x2="380.5" y2="192" stroke="#ff0000" stroke-width="6" stroke-linecap="round"/><line x1="409.5" y1="170" x2="409.5" y2="192" stroke="#ff0000" stroke-width="6" stroke-linecap="round"/><line x1="439.5" y1="170" x2="439.5" y2="192" stroke="#ff0000" stroke-width="6" stroke-linecap="round"/><line x1="469.5" y1="170" x2="469.5" y2="192" stroke="#ff0000" stroke-width="6" stroke-linecap="round"/><line x1="499.5" y1="170" x2="499.5" y2="192" stroke="#ff0000" stroke-width="6" stroke-linecap="round"/><line x1="529.5" y1="170" x2="529.5" y2="192" stroke="#ff0000" stroke-width="6" stroke-linecap="round"/><line x1="559.5" y1="170" x2="559.5" y2="192" stroke="#ff0000" stroke-width="6" stroke-linecap="round"/><line x1="589.5" y1="170" x2="589.5" y2="192" stroke="#ff0000" stroke-width="6" stroke-linecap="round"/><line x1="619.5" y1="170" x2="619.5" y2="192" stroke="#ff0000" stroke-width="6" stroke-linecap="round"/><line x1="648.5" y1="170" x2="648.5" y2="192" stroke="#ff0000" stroke-width="6" stroke-linecap="round"/><line x1="678.5" y1="170" x2="678.5" y2="192" stroke="#ff0000" stroke-width="6" stroke-linecap="round"/><line x1="708.5" y1="170" x2="708.5" y2="192" stroke="#ff0000" stroke-width="6" stroke-linecap="round"/><line x1="738.5" y1="170" x2="738.5" y2="192" stroke="#ff0000" stroke-width="6" stroke-linecap="round"/><line x1="768.5" y1="170" x2="768.5" y2="192" stroke="#ff0000" stroke-width="6" stroke-linecap="round"/><line x1="798.5" y1="170" x2="798.5" y2="192" stroke="#ff0000" stroke-width="6" stroke-linecap="round"/><line x1="828.5" y1="170" x2="828.5" y2="192" stroke="#ff0000" stroke-width="6" stroke-linecap="round"/><line x1="858.5" y1="170" x2="858.5" y2="192" stroke="#ff0000" stroke-width="6" stroke-linecap="round"/><line x1="947.5" y1="170" x2="947.5" y2="192" stroke="#ff0000" stroke-width="6" stroke-linecap="round"/><line x1="977.5" y1="170" x2="977.5" y2="192" stroke="#ff0000" stroke-width="6" stroke-linecap="round"/><line x1="1007.5" y1="170" x2="1007.5" y2="192" stroke="#ff0000" stroke-width="6" stroke-linecap="round"/><line x1="1037.5" y1="170" x2="1037.5" y2="192" stroke="#ff0000" stroke-width="6" stroke-linecap="round"/><line x1="1067.5" y1="170" x2="1067.5" y2="192" stroke="#ff0000" stroke-width="6" stroke-linecap="round"/><line x1="1097.5" y1="170" x2="1097.5" y2="192" stroke="#ff0000" stroke-width="6" stroke-linecap="round"/><line x1="1126.5" y1="170" x2="1126.5" y2="192" stroke="#ff0000" stroke-width="6" stroke-linecap="round"/><line x1="1156.5" y1="170" x2="1156.5" y2="192" stroke="#ff0000" stroke-width="6" stroke-linecap="round"/><line x1="1186.5" y1="170" x2="1186.5" y2="192" stroke="#ff0000" stroke-width="6" stroke-linecap="round"/><line x1="1216.5" y1="170" x2="1216.5" y2="192" stroke="#ff0000" stroke-width="6" stroke-linecap="round"/><line x1="1246.5" y1="170" x2="1246.5" y2="192" stroke="#ff0000" stroke-width="6" stroke-linecap="round"/><line x1="1276.5" y1="170" x2="1276.5" y2="192" stroke="#ff0000" stroke-width="6" stroke-linecap="round"/><line x1="1306.5" y1="170" x2="1306.5" y2="192" stroke="#ff0000" stroke-width="6" stroke-linecap="round"/><line x1="1336.5" y1="170" x2="1336.5" y2="192" stroke="#ff0000" stroke-width="6" stroke-linecap="round"/><line x1="1365.5" y1="170" x2="1365.5" y2="192" stroke="#ff0000" stroke-width="6" stroke-linecap="round"/><line x1="1395.5" y1="170" x2="1395.5" y2="192" stroke="#ff0000" stroke-width="6" stroke-linecap="round"/><line x1="1425.5" y1="164" x2="1425.5" y2="140.5" stroke="#32cd32" stroke-width="6" stroke-linecap="round"/><line x1="1455.5" y1="164" x2="1455.5" y2="140.5" stroke="#32cd32" stroke-width="6" stroke-linecap="round"/><line x1="1485.5" y1="164" x2="1485.5" y2="140.5" stroke="#32cd32" stroke-width="6" stroke-linecap="round"/><line x1="1515.5" y1="164" x2="1515.5" y2="140.5" stroke="#32cd32" stroke-width="6" stroke-linecap="round"/><rect x="37" y="164" width="1478.5" height="6" fill="#ffff00" /><circle cx="1515.5" cy="167" r="3" fill="#ffff00"/><rect x="1859" y="134.6" width="1" height="62.8" fill="#ffffff" class="ce"/><rect x="1859.5" y="140" width="11" height="1" fill="#ffffff" class="ce"/><rect x="1859.5" y="166" width="11" height="1" fill="#ffffff" class="ce"/><rect x="1859.5" y="191" width="11" height="1" fill="#ffffff" class="ce"/><rect x="1859.5" y="152" width="4.5" height="1" fill="#ffffff" /><rect x="1859.5" y="179" width="4.5" height="1" fill="#ffffff" /><text x="1918" y="172.6" font-size="15" fill="#e4e4e4" textLength="8.63578" lengthAdjust="spacingAndGlyphs" text-anchor="end" >0</text><rect x="37" y="231" width="1883" height="124" fill="#00005a" /><polygon points="37.0,285.1 80.0,286.1 110.0,287.1 170.0,288.2 260.0,289.6 277.0,292.1 292.0,294.0 440.0,294.4 500.0,293.8 530.0,290.8 545.0,293.8 590.0,294.2 740.0,294.9 800.0,295.2 886.0,295.2 920.0,295.0 975.0,294.2 1040.0,294.1 1130.0,294.5 1180.0,294.5 1215.0,294.1 1275.0,293.8 1277.0,289.9 1320.0,289.9 1322.0,294.2 1380.0,294.2 1382.0,289.9 1440.0,288.8 1516.0,287.3 1516.0,291.3 1440.0,291.2 1382.0,291.7 1380.0,295.8 1322.0,295.8 1320.0,291.4 1277.0,291.4 1275.0,295.2 1215.0,296.6 1180.0,298.5 1130.0,298.5 1040.0,296.6 975.0,297.8 920.0,300.0 886.0,301.8 800.0,300.8 740.0,299.4 590.0,297.8 545.0,295.2 530.0,292.2 500.0,295.2 440.0,297.6 292.0,297.0 277.0,293.6 260.0,292.1 170.0,291.8 110.0,291.6 80.0,291.6 37.0,291.6" fill="#ff7028"/><rect x="37" y="288.7" width="14" height="1.8" fill="#ff2000" /><rect x="37" y="290.5" width="44" height="1.2" fill="#ffe000" /><rect x="785" y="293.8" width="28" height="1" fill="#ffe000" /><rect x="813" y="293.8" width="60" height="1.2" fill="#d01010" /><rect x="872" y="293.6" width="38" height="1.2" fill="#ffe000" /><rect x="740" y="294.8" width="45" height="1.2" fill="#e81818" /><polyline points="37,285.5 395,285.5 397,286.5 665,286.5 667,287.5 755,287.5 757,286.5 1516,286.5" fill="none" stroke="#f8f8f8" stroke-width="1.1" stroke-dasharray="3.6,3.2"/><polyline points="37,300.3 500,300.3 502,299.5 665,299.5 667,298.5 755,298.5 757,299.2 1420,299.2 1424,298.5 1516,298" fill="none" stroke="#f8f8f8" stroke-width="1.1" stroke-dasharray="3.6,3.2"/><polyline points="37,311.5 51.5,292.8 81.5,292.8 111.5,292.8 141.5,292.8 170.5,292.8 200.5,292.8 230.5,292.8 260.5,292.8 290.5,292.8 320.5,292.8 350.5,292.8 380.5,292.8 409.5,292.8 439.5,292.8 469.5,292.8 499.5,292.8 529.5,292.8 559.5,319.6 589.5,292.8 619.5,292.8 648.5,292.8 678.5,292.8 708.5,292.8 738.5,292.8 768.5,292.8 798.5,292.8 828.5,292.8 858.5,292.8 887.5,292.8 917.5,292.8 947.5,319.6 977.5,292.8 1007.5,292.8 1037.5,292.8 1067.5,292.8 1097.5,292.8 1126.5,292.8 1156.5,319.6 1186.5,292.8 1216.5,292.8 1246.5,292.8 1276.5,292.8 1306.5,292.8 1336.5,292.8 1365.5,292.8 1395.5,292.8 1425.5,292.8 1455.5,292.8 1485.5,292.8 1515.5,292.8" fill="none" stroke="#8dcfe6" stroke-width="3" stroke-linejoin="miter"/><polyline points="37,292.8 51.5,292.8 81.5,292.8 111.5,292.8 141.5,292.8 170.5,292.8 200.5,292.8 230.5,292.8 260.5,292.8 290.5,292.8 320.5,292.8 350.5,292.8 380.5,292.8 409.5,292.8 439.5,292.8 469.5,292.8 499.5,292.8 529.5,292.8 559.5,292.8 589.5,292.8 619.5,292.8 648.5,292.8 678.5,292.8 708.5,292.8 738.5,292.8 768.5,292.8 798.5,292.8 828.5,292.8 858.5,292.8 887.5,258.3 917.5,258.3 947.5,292.8 977.5,292.8 1007.5,292.8 1037.5,292.8 1067.5,292.8 1097.5,292.8 1126.5,292.8 1156.5,292.8 1186.5,292.8 1216.5,292.8 1246.5,292.8 1276.5,292.8 1306.5,292.8 1336.5,292.8 1365.5,292.8 1395.5,292.8 1425.5,292.8 1455.5,292.8 1485.5,292.8 1515.5,292.8" fill="none" stroke="#8dcfe6" stroke-width="3"/><polyline points="37,240.5 51.5,240.5 81.5,240.5 111.5,240.5 141.5,240.5 170.5,240.5 200.5,240.5 230.5,240.5 260.5,240.5 290.5,240.5 320.5,240.5 350.5,240.5 380.5,345.1 409.5,345.1 439.5,345.1 469.5,345.1 499.5,345.1 529.5,345.1 559.5,345.1 589.5,345.1 619.5,345.1 648.5,345.1 678.5,345.1 708.5,345.1 738.5,345.1 768.5,345.1 798.5,345.1 828.5,345.1 858.5,345.1 887.5,345.1 917.5,345.1 947.5,345.1 977.5,345.1 1007.5,345.1 1037.5,345.1 1067.5,345.1 1097.5,345.1 1126.5,345.1 1156.5,345.1 1186.5,345.1 1216.5,345.1 1246.5,345.1 1276.5,345.1 1306.5,345.1 1336.5,345.1 1365.5,345.1 1395.5,345.1 1425.5,240.5 1455.5,240.5 1485.5,240.5 1515.5,240.5" fill="none" stroke="#8dcfe6" stroke-width="4.6" stroke-linejoin="miter"/><rect x="1515.5" y="292.5" width="344" height="1" fill="#e8e8e8" class="ce"/><rect x="1859" y="231" width="1" height="124" fill="#ffffff" class="ce"/><rect x="1859.5" y="240" width="11" height="1" fill="#ffffff" class="ce"/><rect x="1859.5" y="257" width="11" height="1" fill="#ffffff" class="ce"/><rect x="1859.5" y="274" width="11" height="1" fill="#ffffff" class="ce"/><rect x="1859.5" y="292" width="11" height="1" fill="#ffffff" class="ce"/><rect x="1859.5" y="310" width="11" height="1" fill="#ffffff" class="ce"/><rect x="1859.5" y="327" width="11" height="1" fill="#ffffff" class="ce"/><rect x="1859.5" y="344" width="11" height="1" fill="#ffffff" class="ce"/><rect x="1859.5" y="232" width="4.5" height="1" fill="#ffffff" /><rect x="1859.5" y="236" width="4.5" height="1" fill="#ffffff" /><rect x="1859.5" y="243" width="4.5" height="1" fill="#ffffff" /><rect x="1859.5" y="246" width="4.5" height="1" fill="#ffffff" /><rect x="1859.5" y="250" width="4.5" height="1" fill="#ffffff" /><rect x="1859.5" y="254" width="4.5" height="1" fill="#ffffff" /><rect x="1859.5" y="260" width="4.5" height="1" fill="#ffffff" /><rect x="1859.5" y="264" width="4.5" height="1" fill="#ffffff" /><rect x="1859.5" y="268" width="4.5" height="1" fill="#ffffff" /><rect x="1859.5" y="271" width="4.5" height="1" fill="#ffffff" /><rect x="1859.5" y="278" width="4.5" height="1" fill="#ffffff" /><rect x="1859.5" y="282" width="4.5" height="1" fill="#ffffff" /><rect x="1859.5" y="285" width="4.5" height="1" fill="#ffffff" /><rect x="1859.5" y="288" width="4.5" height="1" fill="#ffffff" /><rect x="1859.5" y="296" width="4.5" height="1" fill="#ffffff" /><rect x="1859.5" y="299" width="4.5" height="1" fill="#ffffff" /><rect x="1859.5" y="302" width="4.5" height="1" fill="#ffffff" /><rect x="1859.5" y="306" width="4.5" height="1" fill="#ffffff" /><rect x="1859.5" y="313" width="4.5" height="1" fill="#ffffff" /><rect x="1859.5" y="316" width="4.5" height="1" fill="#ffffff" /><rect x="1859.5" y="320" width="4.5" height="1" fill="#ffffff" /><rect x="1859.5" y="324" width="4.5" height="1" fill="#ffffff" /><rect x="1859.5" y="330" width="4.5" height="1" fill="#ffffff" /><rect x="1859.5" y="334" width="4.5" height="1" fill="#ffffff" /><rect x="1859.5" y="338" width="4.5" height="1" fill="#ffffff" /><rect x="1859.5" y="341" width="4.5" height="1" fill="#ffffff" /><rect x="1859.5" y="348" width="4.5" height="1" fill="#ffffff" /><rect x="1859.5" y="352" width="4.5" height="1" fill="#ffffff" /><text x="1918" y="247.3" font-size="15" fill="#e4e4e4" textLength="34.5431" lengthAdjust="spacingAndGlyphs" text-anchor="end" >1500</text><text x="1918" y="264.8" font-size="15" fill="#e4e4e4" textLength="34.5431" lengthAdjust="spacingAndGlyphs" text-anchor="end" >1000</text><text x="1918" y="282.3" font-size="15" fill="#e4e4e4" textLength="25.9073" lengthAdjust="spacingAndGlyphs" text-anchor="end" >500</text><text x="1918" y="299.8" font-size="15" fill="#e4e4e4" textLength="8.63578" lengthAdjust="spacingAndGlyphs" text-anchor="end" >0</text><text x="1918" y="317.3" font-size="15" fill="#e4e4e4" textLength="31.0823" lengthAdjust="spacingAndGlyphs" text-anchor="end" >-500</text><text x="1918" y="334.8" font-size="15" fill="#e4e4e4" textLength="39.7181" lengthAdjust="spacingAndGlyphs" text-anchor="end" >-1000</text><text x="1918" y="352.3" font-size="15" fill="#e4e4e4" textLength="39.7181" lengthAdjust="spacingAndGlyphs" text-anchor="end" >-1500</text><rect x="37" y="388.4" width="1883" height="211.6" fill="#808080" /><line x1="37" y1="445.5" x2="1859.5" y2="445.5" stroke="#000" stroke-width="1.1" stroke-dasharray="3.4,3"/><line x1="37" y1="471.5" x2="1859.5" y2="471.5" stroke="#000" stroke-width="1.1" stroke-dasharray="3.4,3"/><line x1="37" y1="498.5" x2="1859.5" y2="498.5" stroke="#000" stroke-width="1.1" stroke-dasharray="3.4,3"/><line x1="37" y1="525.5" x2="1859.5" y2="525.5" stroke="#000" stroke-width="1.1" stroke-dasharray="3.4,3"/><polyline points="37,433.8 51.5,436.0 81.5,450.0 111.5,472.5 141.5,489.0 170.5,500.5 200.5,495.5 230.5,504.0 260.5,523.0 290.5,539.0 320.5,552.0 350.5,553.0 380.5,554.5 409.5,559.0 439.5,544.0 469.5,530.0 499.5,510.0 529.5,490.0 559.5,504.0 589.5,512.5 619.5,526.0 648.5,540.5 678.5,535.5 708.5,540.5 738.5,545.5 768.5,550.5 798.5,571.0 828.5,580.0 858.5,583.0 887.5,567.5 917.5,562.0 947.5,567.0 977.5,553.0 1007.5,525.0 1037.5,504.0 1067.5,495.5 1097.5,512.5 1126.5,526.0 1156.5,534.0 1186.5,542.0 1216.5,529.0 1246.5,522.0 1276.5,505.0 1306.5,482.0 1336.5,477.5 1365.5,477.5 1395.5,471.0 1425.5,457.0 1455.5,434.0 1485.5,428.0 1515.5,430.0" fill="none" stroke="#f5f5dc" stroke-width="1.1"/><polyline points="37,487 51.5,486.0 81.5,482.5 111.5,481.0 141.5,481.0 170.5,481.0 200.5,485.0 230.5,481.0 260.5,481.5 290.5,481.5 320.5,481.5 350.5,481.5 380.5,481.5 409.5,481.0 439.5,488.0 469.5,488.0 499.5,490.0 529.5,490.0 559.5,480.5 589.5,482.5 619.5,481.0 648.5,481.0 678.5,486.0 708.5,481.0 738.5,481.0 768.5,481.0 798.5,481.0 828.5,481.0 858.5,481.0 887.5,485.5 917.5,482.5 947.5,481.0 977.5,487.5 1007.5,490.5 1037.5,490.5 1067.5,490.5 1097.5,483.0 1126.5,480.5 1156.5,482.5 1186.5,480.5 1216.5,485.0 1246.5,488.0 1276.5,490.5 1306.5,490.5 1336.5,486.0 1365.5,486.0 1395.5,490.5 1425.5,490.5 1455.5,490.5 1485.5,490.5 1515.5,488.0" fill="none" stroke="#f0f000" stroke-width="1.2"/><polyline points="37,485.7 51.5,485.7 81.5,485.7 111.5,485.7 141.5,485.7 170.5,485.7 200.5,479.1 230.5,485.7 260.5,485.7 290.5,485.7 320.5,485.7 350.5,485.7 380.5,485.7 409.5,485.7 439.5,459.1 469.5,485.7 499.5,485.7 529.5,485.7 559.5,485.7 589.5,485.7 619.5,485.7 648.5,485.7 678.5,472.4 708.5,485.7 738.5,485.7 768.5,485.7 798.5,485.7 828.5,485.7 858.5,485.7 887.5,459.1 917.5,485.7 947.5,485.7 977.5,485.7 1007.5,485.7 1037.5,485.7 1067.5,485.7 1097.5,485.7 1126.5,485.7 1156.5,485.7 1186.5,485.7 1216.5,479.1 1246.5,485.7 1276.5,485.7 1306.5,485.7 1336.5,485.7 1365.5,485.7 1395.5,485.7 1425.5,485.7 1455.5,485.7 1485.5,485.7 1515.5,499.0" fill="none" stroke="#000" stroke-width="2.2"/><polyline points="37,565.4 51.5,565.4 81.5,565.4 111.5,565.4 141.5,565.4 170.5,565.4 200.5,479.1 230.5,479.1 260.5,479.1 290.5,479.1 320.5,479.1 350.5,479.1 380.5,479.1 409.5,479.1 439.5,452.5 469.5,452.5 499.5,452.5 529.5,452.5 559.5,452.5 589.5,452.5 619.5,452.5 648.5,452.5 678.5,439.2 708.5,439.2 738.5,439.2 768.5,439.2 798.5,439.2 828.5,439.2 858.5,439.2 887.5,412.7 917.5,412.7 947.5,412.7 977.5,412.7 1007.5,412.7 1037.5,412.7 1067.5,412.7 1097.5,412.7 1126.5,412.7 1156.5,412.7 1186.5,412.7 1216.5,406.0 1246.5,406.0 1276.5,406.0 1306.5,406.0 1336.5,406.0 1365.5,406.0 1395.5,406.0 1425.5,406.0 1455.5,406.0 1485.5,406.0 1515.5,499.0" fill="none" stroke="#8b0000" stroke-width="3.7" stroke-linejoin="miter"/><ellipse cx="1515.5" cy="497.7" rx="29.5" ry="17.5" fill="none" stroke="#ff0000" stroke-width="1.8"/><rect x="1859" y="388.4" width="1" height="211.6" fill="#f4f4f4" class="ce"/><rect x="1859.5" y="419" width="11" height="1" fill="#f4f4f4" class="ce"/><rect x="1859.5" y="485" width="11" height="1" fill="#f4f4f4" class="ce"/><rect x="1859.5" y="552" width="11" height="1" fill="#f4f4f4" class="ce"/><rect x="1859.5" y="392" width="4.5" height="1" fill="#f4f4f4" /><rect x="1859.5" y="406" width="4.5" height="1" fill="#f4f4f4" /><rect x="1859.5" y="432" width="4.5" height="1" fill="#f4f4f4" /><rect x="1859.5" y="445" width="4.5" height="1" fill="#f4f4f4" /><rect x="1859.5" y="459" width="4.5" height="1" fill="#f4f4f4" /><rect x="1859.5" y="472" width="4.5" height="1" fill="#f4f4f4" /><rect x="1859.5" y="498" width="4.5" height="1" fill="#f4f4f4" /><rect x="1859.5" y="512" width="4.5" height="1" fill="#f4f4f4" /><rect x="1859.5" y="525" width="4.5" height="1" fill="#f4f4f4" /><rect x="1859.5" y="538" width="4.5" height="1" fill="#f4f4f4" /><rect x="1859.5" y="565" width="4.5" height="1" fill="#f4f4f4" /><rect x="1859.5" y="578" width="4.5" height="1" fill="#f4f4f4" /><rect x="1859.5" y="591" width="4.5" height="1" fill="#f4f4f4" /><text x="1918" y="425.9" font-size="15" fill="#e4e4e4" textLength="17.2716" lengthAdjust="spacingAndGlyphs" text-anchor="end" >50</text><text x="1918" y="492.3" font-size="15" fill="#e4e4e4" textLength="8.63578" lengthAdjust="spacingAndGlyphs" text-anchor="end" >0</text><text x="1918" y="558.7" font-size="15" fill="#e4e4e4" textLength="22.4466" lengthAdjust="spacingAndGlyphs" text-anchor="end" >-50</text><rect x="37" y="633.5" width="1883" height="267.5" fill="#000000" /><rect x="37" y="900" width="1823" height="42" fill="#000000" /><rect x="365" y="883.5" width="508.5" height="16.5" fill="url(#hRed)"/><rect x="932.5" y="883.5" width="478.5" height="16.5" fill="url(#hRed)"/><rect x="1411" y="883.5" width="134.5" height="16.5" fill="url(#hGrn)"/><rect x="38" y="890" width="327" height="1.3" fill="#e6e600" /><rect x="873.5" y="890" width="59" height="1.3" fill="#e6e600" /><clipPath id="cRib"><rect x="37" y="882.5" width="1823" height="18"/></clipPath><g clip-path="url(#cRib)" fill="none" stroke="#0000e6" stroke-width="1.3"><circle cx="200.3" cy="885.7" r="7.7"/><path d="M196.3,883.2 h2.8 M201.5,883.2 h2.8"/><path d="M195.6,888 h9"/><circle cx="617.8" cy="885.7" r="7.7"/><path d="M613.8,883.2 h2.8 M619,883.2 h2.8"/><path d="M614,889.6 q3.8,-6 7.600,0"/><circle cx="901.5" cy="885.7" r="7.7"/><path d="M897.5,883.2 h2.8 M902.7,883.2 h2.8"/><path d="M896.8,888 h9"/><circle cx="1169.8" cy="885.7" r="7.7"/><path d="M1165.8,883.2 h2.8 M1171,883.2 h2.8"/><path d="M1166,889.6 q3.8,-6 7.600,0"/><circle cx="1476.2" cy="885.7" r="7.7"/><path d="M1472.2,883.2 h2.8 M1477.4,883.2 h2.8"/><path d="M1471.2,885.8 q5,8.800 10,0"/></g><line x1="51.5" y1="654.879" x2="51.5" y2="656.579" stroke="#8aa8d0" stroke-width="1.8" /><line x1="51.5" y1="660.184" x2="51.5" y2="662.887" stroke="#8aa8d0" stroke-width="1.8" /><rect x="38.6" y="657.2" width="26.3" height="2.4" fill="#000" stroke="#8aa8d0" stroke-width="1.3"/><line x1="81.5" y1="663.505" x2="81.5" y2="664.226" stroke="#ff6a20" stroke-width="1.8" /><line x1="81.5" y1="671.539" x2="81.5" y2="673.908" stroke="#ff6a20" stroke-width="1.8" /><rect x="68" y="664.226" width="27.5" height="7.313" fill="#ff6a20" /><line x1="111.5" y1="684.183" x2="111.5" y2="684.646" stroke="#ff6a20" stroke-width="1.8" /><line x1="111.5" y1="694.174" x2="111.5" y2="696.62" stroke="#ff6a20" stroke-width="1.8" /><rect x="98" y="684.646" width="27.5" height="9.5275" fill="#ff6a20" /><line x1="141.5" y1="688.843" x2="141.5" y2="695.332" stroke="#ff6a20" stroke-width="1.8" /><line x1="141.5" y1="696.749" x2="141.5" y2="698.242" stroke="#ff6a20" stroke-width="1.8" /><rect x="128" y="695.332" width="27.5" height="1.6" fill="#ff6a20" /><line x1="170.5" y1="689.642" x2="170.5" y2="693.35" stroke="#8aa8d0" stroke-width="1.8" /><line x1="170.5" y1="697.367" x2="170.5" y2="699.221" stroke="#8aa8d0" stroke-width="1.8" /><rect x="157.6" y="693.9" width="26.3" height="2.8" fill="#000" stroke="#8aa8d0" stroke-width="1.3"/><line x1="200.5" y1="678.183" x2="200.5" y2="678.312" stroke="#8aa8d0" stroke-width="1.8" /><line x1="200.5" y1="689.307" x2="200.5" y2="692.268" stroke="#8aa8d0" stroke-width="1.8" /><rect x="187.6" y="678.9" width="26.3" height="9.8" fill="#000" stroke="#8aa8d0" stroke-width="1.3"/><line x1="230.5" y1="677.153" x2="230.5" y2="678.621" stroke="#ff6a20" stroke-width="1.8" /><line x1="230.5" y1="714.877" x2="230.5" y2="715.031" stroke="#ff6a20" stroke-width="1.8" /><rect x="217" y="678.621" width="27.5" height="36.256" fill="#ff6a20" /><line x1="260.5" y1="713.512" x2="260.5" y2="721.778" stroke="#ff6a20" stroke-width="1.8" /><line x1="260.5" y1="722.885" x2="260.5" y2="725.46" stroke="#ff6a20" stroke-width="1.8" /><rect x="247" y="721.478" width="27.5" height="2" fill="#ff6a20" /><line x1="290.5" y1="717.992" x2="290.5" y2="718.636" stroke="#ff6a20" stroke-width="1.8" /><line x1="290.5" y1="733.159" x2="290.5" y2="738.85" stroke="#ff6a20" stroke-width="1.8" /><rect x="277" y="718.636" width="27.5" height="14.523" fill="#ff6a20" /><line x1="320.5" y1="725.357" x2="320.5" y2="728.756" stroke="#ff6a20" stroke-width="1.8" /><line x1="320.5" y1="740.961" x2="320.5" y2="741.322" stroke="#ff6a20" stroke-width="1.8" /><rect x="307" y="728.756" width="27.5" height="12.2055" fill="#ff6a20" /><line x1="350.5" y1="736.841" x2="350.5" y2="737.768" stroke="#8aa8d0" stroke-width="1.8" /><line x1="350.5" y1="746.858" x2="350.5" y2="754.197" stroke="#8aa8d0" stroke-width="1.8" /><rect x="337.6" y="738.4" width="26.3" height="7.9" fill="#000" stroke="#8aa8d0" stroke-width="1.3"/><line x1="380.5" y1="724.533" x2="380.5" y2="727.829" stroke="#ff6a20" stroke-width="1.8" /><line x1="380.5" y1="748.532" x2="380.5" y2="753.45" stroke="#ff6a20" stroke-width="1.8" /><rect x="367" y="727.829" width="27.5" height="20.703" fill="#ff6a20" /><line x1="409.5" y1="743.691" x2="409.5" y2="746.24" stroke="#ff6a20" stroke-width="1.8" /><line x1="409.5" y1="752.343" x2="409.5" y2="758.368" stroke="#ff6a20" stroke-width="1.8" /><rect x="396" y="746.24" width="27.5" height="6.10275" fill="#ff6a20" /><line x1="439.5" y1="732.181" x2="439.5" y2="734.267" stroke="#8aa8d0" stroke-width="1.8" /><line x1="439.5" y1="753.193" x2="439.5" y2="753.785" stroke="#8aa8d0" stroke-width="1.8" /><rect x="426.6" y="734.9" width="26.3" height="17.7" fill="#000" stroke="#8aa8d0" stroke-width="1.3"/><line x1="469.5" y1="726.335" x2="469.5" y2="727.572" stroke="#8aa8d0" stroke-width="1.8" /><line x1="469.5" y1="740.421" x2="469.5" y2="743.691" stroke="#8aa8d0" stroke-width="1.8" /><rect x="456.6" y="728.2" width="26.3" height="11.6" fill="#000" stroke="#8aa8d0" stroke-width="1.3"/><line x1="499.5" y1="709.212" x2="499.5" y2="711.555" stroke="#8aa8d0" stroke-width="1.8" /><line x1="499.5" y1="721.494" x2="499.5" y2="722.216" stroke="#8aa8d0" stroke-width="1.8" /><rect x="486.6" y="712.2" width="26.3" height="8.7" fill="#000" stroke="#8aa8d0" stroke-width="1.3"/><line x1="529.5" y1="698.345" x2="529.5" y2="700.302" stroke="#8aa8d0" stroke-width="1.8" /><line x1="529.5" y1="705.942" x2="529.5" y2="706.765" stroke="#8aa8d0" stroke-width="1.8" /><rect x="516.6" y="700.9" width="26.3" height="4.4" fill="#000" stroke="#8aa8d0" stroke-width="1.3"/><line x1="559.5" y1="720.567" x2="559.5" y2="723.838" stroke="#ff6a20" stroke-width="1.8" /><line x1="559.5" y1="746.317" x2="559.5" y2="749.356" stroke="#ff6a20" stroke-width="1.8" /><rect x="546" y="723.838" width="27.5" height="22.4797" fill="#ff6a20" /><line x1="589.5" y1="738.335" x2="589.5" y2="742.455" stroke="#8aa8d0" stroke-width="1.8" /><line x1="589.5" y1="742.79" x2="589.5" y2="751.416" stroke="#8aa8d0" stroke-width="1.8" /><rect x="576" y="742.155" width="27.5" height="2" fill="#8aa8d0" /><line x1="619.5" y1="738.953" x2="619.5" y2="746.678" stroke="#ff6a20" stroke-width="1.8" /><line x1="619.5" y1="753.991" x2="619.5" y2="757.442" stroke="#ff6a20" stroke-width="1.8" /><rect x="606" y="746.678" width="27.5" height="7.313" fill="#ff6a20" /><line x1="648.5" y1="763.956" x2="648.5" y2="765.733" stroke="#ff6a20" stroke-width="1.8" /><line x1="648.5" y1="769.389" x2="648.5" y2="774.617" stroke="#ff6a20" stroke-width="1.8" /><rect x="635.6" y="766.3" width="26.3" height="2.5" fill="#000" stroke="#ff6a20" stroke-width="1.3"/><line x1="678.5" y1="758.034" x2="678.5" y2="758.034" stroke="#8aa8d0" stroke-width="1.8" /><line x1="678.5" y1="774.231" x2="678.5" y2="774.436" stroke="#8aa8d0" stroke-width="1.8" /><rect x="665.6" y="758.6" width="26.3" height="15.0" fill="#000" stroke="#8aa8d0" stroke-width="1.3"/><line x1="708.5" y1="764.291" x2="708.5" y2="767.02" stroke="#ff6a20" stroke-width="1.8" /><line x1="708.5" y1="769.518" x2="708.5" y2="776.96" stroke="#ff6a20" stroke-width="1.8" /><rect x="695" y="767.02" width="27.5" height="2.49775" fill="#ff6a20" /><line x1="738.5" y1="756.077" x2="738.5" y2="764.317" stroke="#ff6a20" stroke-width="1.8" /><line x1="738.5" y1="786.771" x2="738.5" y2="786.796" stroke="#ff6a20" stroke-width="1.8" /><rect x="725" y="764.317" width="27.5" height="22.454" fill="#ff6a20" /><line x1="768.5" y1="784.427" x2="768.5" y2="788.856" stroke="#ff6a20" stroke-width="1.8" /><line x1="768.5" y1="794.933" x2="768.5" y2="796.942" stroke="#ff6a20" stroke-width="1.8" /><rect x="755" y="788.856" width="27.5" height="6.077" fill="#ff6a20" /><line x1="798.5" y1="804.203" x2="798.5" y2="804.307" stroke="#ff6a20" stroke-width="1.8" /><line x1="798.5" y1="811.079" x2="798.5" y2="823.078" stroke="#ff6a20" stroke-width="1.8" /><rect x="785" y="804.307" width="27.5" height="6.77225" fill="#ff6a20" /><line x1="828.5" y1="805.259" x2="828.5" y2="815.044" stroke="#ff6a20" stroke-width="1.8" /><line x1="828.5" y1="820.452" x2="828.5" y2="823.748" stroke="#ff6a20" stroke-width="1.8" /><rect x="815" y="815.044" width="27.5" height="5.4075" fill="#ff6a20" /><line x1="858.5" y1="804.77" x2="858.5" y2="810.899" stroke="#ff6a20" stroke-width="1.8" /><line x1="858.5" y1="822.846" x2="858.5" y2="829.31" stroke="#ff6a20" stroke-width="1.8" /><rect x="845" y="810.899" width="27.5" height="11.948" fill="#ff6a20" /><line x1="887.5" y1="799.877" x2="887.5" y2="804.435" stroke="#8aa8d0" stroke-width="1.8" /><line x1="887.5" y1="820.271" x2="887.5" y2="824.855" stroke="#8aa8d0" stroke-width="1.8" /><rect x="874.6" y="805.0" width="26.3" height="14.6" fill="#000" stroke="#8aa8d0" stroke-width="1.3"/><line x1="917.5" y1="813.242" x2="917.5" y2="814.014" stroke="#ff6a20" stroke-width="1.8" /><line x1="917.5" y1="824.366" x2="917.5" y2="832.322" stroke="#ff6a20" stroke-width="1.8" /><rect x="904" y="814.014" width="27.5" height="10.3515" fill="#ff6a20" /><line x1="947.5" y1="816.332" x2="947.5" y2="826.915" stroke="#ff6a20" stroke-width="1.8" /><line x1="947.5" y1="838.811" x2="947.5" y2="839.172" stroke="#ff6a20" stroke-width="1.8" /><rect x="934" y="826.915" width="27.5" height="11.8965" fill="#ff6a20" /><line x1="977.5" y1="809.534" x2="977.5" y2="814.529" stroke="#8aa8d0" stroke-width="1.8" /><line x1="977.5" y1="828.769" x2="977.5" y2="833.584" stroke="#8aa8d0" stroke-width="1.8" /><rect x="964.6" y="815.1" width="26.3" height="13.0" fill="#000" stroke="#8aa8d0" stroke-width="1.3"/><line x1="1007.5" y1="785.2" x2="1007.5" y2="785.277" stroke="#8aa8d0" stroke-width="1.8" /><line x1="1007.5" y1="799.62" x2="1007.5" y2="814.632" stroke="#8aa8d0" stroke-width="1.8" /><rect x="994.6" y="785.9" width="26.3" height="13.1" fill="#000" stroke="#8aa8d0" stroke-width="1.3"/><line x1="1037.5" y1="781.441" x2="1037.5" y2="787.543" stroke="#ff6a20" stroke-width="1.8" /><line x1="1037.5" y1="797.071" x2="1037.5" y2="803.354" stroke="#ff6a20" stroke-width="1.8" /><rect x="1024.6" y="788.1" width="26.3" height="8.3" fill="#000" stroke="#ff6a20" stroke-width="1.3"/><line x1="1067.5" y1="783.346" x2="1067.5" y2="791.328" stroke="#ff6a20" stroke-width="1.8" /><line x1="1067.5" y1="797.56" x2="1067.5" y2="798.899" stroke="#ff6a20" stroke-width="1.8" /><rect x="1054" y="791.328" width="27.5" height="6.2315" fill="#ff6a20" /><line x1="1097.5" y1="797.328" x2="1097.5" y2="808.452" stroke="#ff6a20" stroke-width="1.8" /><line x1="1097.5" y1="824.366" x2="1097.5" y2="829.13" stroke="#ff6a20" stroke-width="1.8" /><rect x="1084" y="808.452" width="27.5" height="15.9135" fill="#ff6a20" /><line x1="1126.5" y1="820.709" x2="1126.5" y2="821.353" stroke="#ff6a20" stroke-width="1.8" /><line x1="1126.5" y1="831.499" x2="1126.5" y2="837.55" stroke="#ff6a20" stroke-width="1.8" /><rect x="1113" y="821.353" width="27.5" height="10.1455" fill="#ff6a20" /><line x1="1156.5" y1="823.748" x2="1156.5" y2="836.082" stroke="#ff6a20" stroke-width="1.8" /><line x1="1156.5" y1="837.369" x2="1156.5" y2="842.597" stroke="#ff6a20" stroke-width="1.8" /><rect x="1143" y="836.082" width="27.5" height="1.6" fill="#ff6a20" /><line x1="1186.5" y1="832.014" x2="1186.5" y2="836.262" stroke="#ff6a20" stroke-width="1.8" /><line x1="1186.5" y1="840.408" x2="1186.5" y2="841.077" stroke="#ff6a20" stroke-width="1.8" /><rect x="1173" y="836.262" width="27.5" height="4.14575" fill="#ff6a20" /><line x1="1216.5" y1="812.212" x2="1216.5" y2="816.177" stroke="#8aa8d0" stroke-width="1.8" /><line x1="1216.5" y1="859.334" x2="1216.5" y2="862.167" stroke="#8aa8d0" stroke-width="1.8" /><rect x="1203.6" y="816.8" width="26.3" height="42.0" fill="#000" stroke="#8aa8d0" stroke-width="1.3"/><line x1="1246.5" y1="805.13" x2="1246.5" y2="809.534" stroke="#ff6a20" stroke-width="1.8" /><line x1="1246.5" y1="837.653" x2="1246.5" y2="839.378" stroke="#ff6a20" stroke-width="1.8" /><rect x="1233" y="809.534" width="27.5" height="28.119" fill="#ff6a20" /><line x1="1276.5" y1="811.001" x2="1276.5" y2="813.988" stroke="#8aa8d0" stroke-width="1.8" /><line x1="1276.5" y1="821.224" x2="1276.5" y2="838.554" stroke="#8aa8d0" stroke-width="1.8" /><rect x="1263.6" y="814.6" width="26.3" height="6.0" fill="#000" stroke="#8aa8d0" stroke-width="1.3"/><line x1="1306.5" y1="791.766" x2="1306.5" y2="792.59" stroke="#8aa8d0" stroke-width="1.8" /><line x1="1306.5" y1="802.89" x2="1306.5" y2="812.186" stroke="#8aa8d0" stroke-width="1.8" /><rect x="1293" y="792.59" width="27.5" height="10.3" fill="#8aa8d0" /><line x1="1336.5" y1="801.036" x2="1336.5" y2="808.401" stroke="#ff6a20" stroke-width="1.8" /><line x1="1336.5" y1="809.662" x2="1336.5" y2="817.259" stroke="#ff6a20" stroke-width="1.8" /><rect x="1323" y="808.401" width="27.5" height="1.6" fill="#ff6a20" /><line x1="1365.5" y1="798.925" x2="1365.5" y2="810.873" stroke="#ff6a20" stroke-width="1.8" /><line x1="1365.5" y1="817.619" x2="1365.5" y2="819.679" stroke="#ff6a20" stroke-width="1.8" /><rect x="1352" y="810.873" width="27.5" height="6.7465" fill="#ff6a20" /><line x1="1395.5" y1="793.44" x2="1395.5" y2="794.985" stroke="#8aa8d0" stroke-width="1.8" /><line x1="1395.5" y1="819.319" x2="1395.5" y2="822.434" stroke="#8aa8d0" stroke-width="1.8" /><rect x="1382.6" y="795.6" width="26.3" height="23.1" fill="#000" stroke="#8aa8d0" stroke-width="1.3"/><rect x="1412.6" y="783.6" width="26.3" height="6.5" fill="#000" stroke="#8aa8d0" stroke-width="1.3"/><line x1="1455.5" y1="766.531" x2="1455.5" y2="767.381" stroke="#8aa8d0" stroke-width="1.8" /><line x1="1455.5" y1="783.166" x2="1455.5" y2="783.475" stroke="#8aa8d0" stroke-width="1.8" /><rect x="1442.6" y="768.0" width="26.3" height="14.6" fill="#000" stroke="#8aa8d0" stroke-width="1.3"/><line x1="1485.5" y1="760.532" x2="1485.5" y2="774.849" stroke="#ff6a20" stroke-width="1.8" /><line x1="1485.5" y1="775.878" x2="1485.5" y2="776.574" stroke="#ff6a20" stroke-width="1.8" /><rect x="1472" y="774.549" width="27.5" height="2" fill="#ff6a20" /><line x1="1515.5" y1="768.9" x2="1515.5" y2="772.145" stroke="#8aa8d0" stroke-width="1.8" /><line x1="1515.5" y1="774.642" x2="1515.5" y2="774.694" stroke="#8aa8d0" stroke-width="1.8" /><rect x="1502" y="772.145" width="27.5" height="2.49775" fill="#8aa8d0" /><polyline points="37,666 51.5,662.0 81.5,679.0 111.5,708.0 141.5,704.0 170.5,696.0 200.5,678.0 230.5,730.5 260.5,735.5 290.5,746.0 320.5,752.0 350.5,746.0 380.5,757.5 409.5,763.0 439.5,737.5 469.5,731.0 499.5,711.0 529.5,701.0 559.5,767.0 589.5,753.0 619.5,765.0 648.5,778.0 678.5,764.0 708.5,778.0 738.5,799.5 768.5,807.5 798.5,826.0 828.5,832.0 858.5,832.0 887.5,808.0 917.5,837.5 947.5,853.0 977.5,821.5 1007.5,783.0 1037.5,792.0 1067.5,808.0 1097.5,844.0 1126.5,845.5 1156.5,848.0 1186.5,848.0 1216.5,821.0 1246.5,850.5 1276.5,822.5 1306.5,810.5 1336.5,820.0 1365.5,829.5 1395.5,797.0 1425.5,782.5 1455.5,768.0 1485.5,782.5 1515.5,781.0" fill="none" stroke="#009000" stroke-width="1.15"/><polyline points="37,655 51.5,652.5 81.5,671.0 111.5,701.0 141.5,697.0 170.5,689.5 200.5,669.0 230.5,716.0 260.5,722.5 290.5,731.0 320.5,735.5 350.5,732.5 380.5,743.0 409.5,747.5 439.5,722.5 469.5,716.0 499.5,699.0 529.5,690.0 559.5,754.0 589.5,742.5 619.5,753.0 648.5,765.0 678.5,752.5 708.5,767.5 738.5,786.0 768.5,794.0 798.5,812.0 828.5,817.0 858.5,817.5 887.5,792.0 917.5,821.0 947.5,835.5 977.5,801.0 1007.5,766.0 1037.5,775.0 1067.5,791.0 1097.5,826.0 1126.5,829.0 1156.5,832.0 1186.5,834.0 1216.5,802.0 1246.5,829.0 1276.5,800.0 1306.5,785.5 1336.5,800.0 1365.5,812.5 1395.5,782.0 1425.5,769.0 1455.5,752.5 1485.5,767.5 1515.5,770.8" fill="none" stroke="#f40000" stroke-width="1.15"/><rect x="1425" y="134.6" width="1.9" height="62.8" fill="#25a825" /><line x1="1515.9" y1="134.6" x2="1515.9" y2="197.4" stroke="#e00000" stroke-width="1.8" stroke-dasharray="4.3,3.4"/><rect x="1425" y="231" width="1.9" height="124" fill="#25a825" /><line x1="1515.9" y1="231" x2="1515.9" y2="355" stroke="#e00000" stroke-width="1.8" stroke-dasharray="4.3,3.4"/><rect x="1425" y="388.4" width="1.9" height="211.6" fill="#25a825" /><line x1="1515.9" y1="388.4" x2="1515.9" y2="600" stroke="#e00000" stroke-width="1.8" stroke-dasharray="4.3,3.4"/><rect x="1425" y="633.5" width="1.9" height="249.1" fill="#25a825" /><line x1="1515.9" y1="633.5" x2="1515.9" y2="882.6" stroke="#e00000" stroke-width="1.8" stroke-dasharray="4.3,3.4"/><polygon points="1423.7,837.5 1436,849.9 1428.2,849.9 1428.2,866.1 1420.1,866.1 1420.1,849.9 1411.4,849.9" fill="#009600"/><polygon points="1514.8,744.2 1505.3,733.8 1511.1,733.8 1511.1,721.1 1518,721.1 1518,733.8 1524.3,733.8" fill="#ff0000"/><rect x="1859" y="633.5" width="1" height="249.5" fill="#ffffff" class="ce"/><rect x="1859.5" y="652" width="11" height="1" fill="#ffffff" class="ce"/><rect x="1859.5" y="677" width="11" height="1" fill="#ffffff" class="ce"/><rect x="1859.5" y="703" width="11" height="1" fill="#ffffff" class="ce"/><rect x="1859.5" y="729" width="11" height="1" fill="#ffffff" class="ce"/><rect x="1859.5" y="754" width="11" height="1" fill="#ffffff" class="ce"/><rect x="1859.5" y="780" width="11" height="1" fill="#ffffff" class="ce"/><rect x="1859.5" y="806" width="11" height="1" fill="#ffffff" class="ce"/><rect x="1859.5" y="832" width="11" height="1" fill="#ffffff" class="ce"/><rect x="1859.5" y="858" width="11" height="1" fill="#ffffff" class="ce"/><rect x="1859.5" y="639" width="4.5" height="1" fill="#ffffff" /><rect x="1859.5" y="664" width="4.5" height="1" fill="#ffffff" /><rect x="1859.5" y="690" width="4.5" height="1" fill="#ffffff" /><rect x="1859.5" y="716" width="4.5" height="1" fill="#ffffff" /><rect x="1859.5" y="742" width="4.5" height="1" fill="#ffffff" /><rect x="1859.5" y="767" width="4.5" height="1" fill="#ffffff" /><rect x="1859.5" y="793" width="4.5" height="1" fill="#ffffff" /><rect x="1859.5" y="819" width="4.5" height="1" fill="#ffffff" /><rect x="1859.5" y="845" width="4.5" height="1" fill="#ffffff" /><rect x="1859.5" y="870" width="4.5" height="1" fill="#ffffff" /><text x="1918" y="658" font-size="15" fill="#e4e4e4" textLength="25.9073" lengthAdjust="spacingAndGlyphs" text-anchor="end" >430</text><text x="1918" y="683.75" font-size="15" fill="#e4e4e4" textLength="25.9073" lengthAdjust="spacingAndGlyphs" text-anchor="end" >420</text><text x="1918" y="709.5" font-size="15" fill="#e4e4e4" textLength="25.9073" lengthAdjust="spacingAndGlyphs" text-anchor="end" >410</text><text x="1918" y="735.25" font-size="15" fill="#e4e4e4" textLength="25.9073" lengthAdjust="spacingAndGlyphs" text-anchor="end" >400</text><text x="1918" y="761" font-size="15" fill="#e4e4e4" textLength="25.9073" lengthAdjust="spacingAndGlyphs" text-anchor="end" >390</text><text x="1918" y="786.75" font-size="15" fill="#e4e4e4" textLength="25.9073" lengthAdjust="spacingAndGlyphs" text-anchor="end" >380</text><text x="1918" y="812.5" font-size="15" fill="#e4e4e4" textLength="25.9073" lengthAdjust="spacingAndGlyphs" text-anchor="end" >370</text><text x="1918" y="838.25" font-size="15" fill="#e4e4e4" textLength="25.9073" lengthAdjust="spacingAndGlyphs" text-anchor="end" >360</text><text x="1918" y="864" font-size="15" fill="#e4e4e4" textLength="25.9073" lengthAdjust="spacingAndGlyphs" text-anchor="end" >350</text><rect x="1864.8" y="764.7" width="57" height="20.700" fill="#000" stroke="#fff" stroke-width="1.4"/><text x="1866.8" y="780.2" font-size="15" fill="#00d400" textLength="54.5" lengthAdjust="spacingAndGlyphs" >382.1000</text><rect x="37" y="900" width="1822.5" height="1.2" fill="#ffffff" /><rect x="37" y="920.2" width="1822.5" height="1.1" fill="#ffffff" /><rect x="51" y="900" width="1.2" height="7.5" fill="#ffffff" /><rect x="81" y="900" width="1.2" height="7.5" fill="#ffffff" /><rect x="111" y="900" width="1.3" height="21" fill="#ffffff" /><text x="114" y="916.2" font-size="15" fill="#f4f4f4" textLength="17.2716" lengthAdjust="spacingAndGlyphs" >22</text><rect x="141" y="900" width="1.2" height="7.5" fill="#ffffff" /><rect x="170" y="900" width="1.2" height="7.5" fill="#ffffff" /><rect x="200" y="900" width="1.2" height="7.5" fill="#ffffff" /><rect x="230" y="900" width="1.2" height="7.5" fill="#ffffff" /><rect x="260" y="900" width="1.3" height="21" fill="#ffffff" /><text x="263" y="916.2" font-size="15" fill="#f4f4f4" textLength="17.2716" lengthAdjust="spacingAndGlyphs" >29</text><rect x="290" y="900" width="1.2" height="7.5" fill="#ffffff" /><rect x="320" y="900" width="1.2" height="7.5" fill="#ffffff" /><rect x="350" y="900" width="1.3" height="21" fill="#ffffff" /><rect x="350" y="920" width="1.3" height="21" fill="#ffffff" /><text x="352.5" y="936.2" font-size="15" fill="#f4f4f4" textLength="75.5923" lengthAdjust="spacingAndGlyphs" >September</text><rect x="380" y="900" width="1.2" height="7.5" fill="#ffffff" /><rect x="409" y="900" width="1.3" height="21" fill="#ffffff" /><text x="412" y="916.2" font-size="15" fill="#f4f4f4" textLength="8.63578" lengthAdjust="spacingAndGlyphs" >6</text><rect x="439" y="900" width="1.2" height="7.5" fill="#ffffff" /><rect x="469" y="900" width="1.2" height="7.5" fill="#ffffff" /><rect x="499" y="900" width="1.2" height="7.5" fill="#ffffff" /><rect x="529" y="900" width="1.3" height="21" fill="#ffffff" /><text x="532" y="916.2" font-size="15" fill="#f4f4f4" textLength="17.2716" lengthAdjust="spacingAndGlyphs" >12</text><rect x="559" y="900" width="1.2" height="7.5" fill="#ffffff" /><rect x="589" y="900" width="1.2" height="7.5" fill="#ffffff" /><rect x="619" y="900" width="1.2" height="7.5" fill="#ffffff" /><rect x="648" y="900" width="1.2" height="7.5" fill="#ffffff" /><rect x="678" y="900" width="1.3" height="21" fill="#ffffff" /><text x="681" y="916.2" font-size="15" fill="#f4f4f4" textLength="17.2716" lengthAdjust="spacingAndGlyphs" >19</text><rect x="708" y="900" width="1.2" height="7.5" fill="#ffffff" /><rect x="738" y="900" width="1.2" height="7.5" fill="#ffffff" /><rect x="768" y="900" width="1.2" height="7.5" fill="#ffffff" /><rect x="798" y="900" width="1.2" height="7.5" fill="#ffffff" /><rect x="828" y="900" width="1.3" height="21" fill="#ffffff" /><text x="831" y="916.2" font-size="15" fill="#f4f4f4" textLength="17.2716" lengthAdjust="spacingAndGlyphs" >26</text><rect x="858" y="900" width="1.2" height="7.5" fill="#ffffff" /><rect x="887" y="900" width="1.2" height="7.5" fill="#ffffff" /><rect x="917" y="900" width="1.2" height="7.5" fill="#ffffff" /><rect x="947" y="900" width="1.2" height="7.5" fill="#ffffff" /><rect x="977" y="900" width="1.3" height="21" fill="#ffffff" /><text x="980" y="916.2" font-size="15" fill="#f4f4f4" textLength="8.63578" lengthAdjust="spacingAndGlyphs" >3</text><rect x="977" y="920" width="1.3" height="21" fill="#ffffff" /><text x="979.5" y="936.2" font-size="15" fill="#f4f4f4" textLength="54.9763" lengthAdjust="spacingAndGlyphs" >October</text><rect x="1007" y="900" width="1.2" height="7.5" fill="#ffffff" /><rect x="1037" y="900" width="1.2" height="7.5" fill="#ffffff" /><rect x="1067" y="900" width="1.2" height="7.5" fill="#ffffff" /><rect x="1097" y="900" width="1.2" height="7.5" fill="#ffffff" /><rect x="1126" y="900" width="1.3" height="21" fill="#ffffff" /><text x="1129" y="916.2" font-size="15" fill="#f4f4f4" textLength="17.2716" lengthAdjust="spacingAndGlyphs" >10</text><rect x="1156" y="900" width="1.2" height="7.5" fill="#ffffff" /><rect x="1186" y="900" width="1.2" height="7.5" fill="#ffffff" /><rect x="1216" y="900" width="1.2" height="7.5" fill="#ffffff" /><rect x="1246" y="900" width="1.2" height="7.5" fill="#ffffff" /><rect x="1276" y="900" width="1.3" height="21" fill="#ffffff" /><text x="1279" y="916.2" font-size="15" fill="#f4f4f4" textLength="17.2716" lengthAdjust="spacingAndGlyphs" >17</text><rect x="1306" y="900" width="1.2" height="7.5" fill="#ffffff" /><rect x="1336" y="900" width="1.2" height="7.5" fill="#ffffff" /><rect x="1365" y="900" width="1.2" height="7.5" fill="#ffffff" /><rect x="1395" y="900" width="1.2" height="7.5" fill="#ffffff" /><rect x="1425" y="900" width="1.3" height="21" fill="#ffffff" /><text x="1428" y="916.2" font-size="15" fill="#f4f4f4" textLength="17.2716" lengthAdjust="spacingAndGlyphs" >24</text><rect x="1455" y="900" width="1.2" height="7.5" fill="#ffffff" /><rect x="1485" y="900" width="1.2" height="7.5" fill="#ffffff" /><rect x="1515" y="900" width="1.2" height="7.5" fill="#ffffff" /><rect x="1545" y="900" width="1.2" height="7.5" fill="#ffffff" /><rect x="1575" y="900" width="1.3" height="21" fill="#ffffff" /><text x="1578" y="916.2" font-size="15" fill="#f4f4f4" textLength="17.2716" lengthAdjust="spacingAndGlyphs" >31</text><rect x="1604" y="900" width="1.3" height="21" fill="#ffffff" /><rect x="1604" y="920" width="1.3" height="21" fill="#ffffff" /><text x="1606.5" y="936.2" font-size="15" fill="#f4f4f4" textLength="71.2792" lengthAdjust="spacingAndGlyphs" >November</text><rect x="1634" y="900" width="1.2" height="7.5" fill="#ffffff" /><rect x="1664" y="900" width="1.2" height="7.5" fill="#ffffff" /><rect x="1694" y="900" width="1.2" height="7.5" fill="#ffffff" /><rect x="1724" y="900" width="1.3" height="21" fill="#ffffff" /><text x="1727" y="916.2" font-size="15" fill="#f4f4f4" textLength="8.63578" lengthAdjust="spacingAndGlyphs" >7</text><rect x="1754" y="900" width="1.2" height="7.5" fill="#ffffff" /><rect x="1784" y="900" width="1.2" height="7.5" fill="#ffffff" /><rect x="1814" y="900" width="1.2" height="7.5" fill="#ffffff" /><rect x="1843" y="900" width="1.2" height="7.5" fill="#ffffff" /><rect x="1861" y="901.5" width="60" height="41" fill="#f0f0f0" /><rect x="1860" y="901" width="1.2" height="41.5" fill="#c0c0c0" /><g fill="none" stroke="#00ff00" stroke-width="1.5"><circle cx="1889.5" cy="920" r="9.8"/><path d="M1884,923.5 q5.5,5 11,0"/></g><circle cx="1886" cy="916.5" r="1.4" fill="#00ff00"/><circle cx="1893" cy="916.5" r="1.4" fill="#00ff00"/><rect x="37" y="942" width="1883" height="28.5" fill="#f0f0f0" /><rect x="37" y="940.6" width="1823" height="1.9" fill="#2e2e2e" /><rect x="0" y="970" width="37" height="1" fill="#a8a8a8" class="ce"/><rect x="0" y="970.5" width="1920" height="1.2" fill="#dadada" /><rect x="1526" y="952.5" width="120" height="6.2" fill="#858585" /><rect x="1669.9" y="945" width="1.3" height="20" fill="#8a8a8a" /><rect x="1729.9" y="945" width="1.3" height="20" fill="#8a8a8a" /><rect x="1842.4" y="945" width="1.3" height="20" fill="#8a8a8a" /><g fill="none" stroke="#4a4a4a" stroke-width="3"><path d="M1681.3,955.5 a6.2,6.2 0 0 1 10.2,-4.6"/><path d="M1693.7,954.5 a6.2,6.2 0 0 1 -10.2,4.6"/></g><path d="M1689.5,947 l5.5,0.5 l-1.5,6 z M1685.5,963 l-5.5,-0.5 l1.5,-6 z" fill="#4a4a4a"/><rect x="1705" y="946" width="20" height="18" fill="#e9e9e9" /><text x="1714.8" y="960.8" font-size="15" fill="#555555" text-anchor="middle" font-weight="bold">D</text><path d="M1747.5,947.5 l4.2,5 h-2.9 v5 h2.9 l-4.2,5 l-4.2,-5 h2.9 v-5 h-2.9 z" fill="#4a4a4a"/><path d="M1773.7,945.5 l3.6,4.2 h-2.4 v3.9 h3.9 v-2.4 l4.2,3.6 l-4.2,3.6 v-2.4 h-3.9 v3.9 h2.4 l-3.6,4.2 l-3.6,-4.2 h2.4 v-3.9 h-3.9 v2.4 l-4.2,-3.6 l4.2,-3.6 v2.4 h3.9 v-3.9 h-2.4 z" fill="#4a4a4a"/><circle cx="1800" cy="955" r="6.6" fill="#f6f6f6" stroke="#4a4a4a" stroke-width="1.5"/><rect x="1796.3" y="954" width="7.4" height="2.2" fill="#4a4a4a" /><circle cx="1826.3" cy="955" r="6.6" fill="#f6f6f6" stroke="#4a4a4a" stroke-width="1.5"/><rect x="1822.6" y="954" width="7.4" height="2.2" fill="#4a4a4a" /><rect x="1825.2" y="951.3" width="2.2" height="7.4" fill="#4a4a4a" /><path d="M1864,950 v10.5 l-6,-5.25 z" fill="#c2c2c2"/><path d="M1883.5,950 v10.5 l6,-5.25 z" fill="#c2c2c2"/><rect x="1904.5" y="948.5" width="14" height="13" fill="#fafafa" stroke="#4a4a4a" stroke-width="1.3"/><rect x="1904" y="948" width="15" height="3" fill="#4a4a4a" /><rect x="1906.5" y="953.5" width="2" height="1.2" fill="#4a4a4a" /><rect x="1909.5" y="953.5" width="7.5" height="1.2" fill="#4a4a4a" /><rect x="1906.5" y="956.2" width="2" height="1.2" fill="#4a4a4a" /><rect x="1909.5" y="956.2" width="7.5" height="1.2" fill="#4a4a4a" /><rect x="1906.5" y="958.9" width="2" height="1.2" fill="#4a4a4a" /><rect x="1909.5" y="958.9" width="7.5" height="1.2" fill="#4a4a4a" /><rect x="0" y="971.7" width="1920" height="39" fill="#ebebeb" /><rect x="0" y="1010.3" width="1920" height="1" fill="#bdbdbd" /><rect x="0" y="1011.2" width="1920" height="1.4" fill="#fdfdfd" /><rect x="0" y="974" width="9" height="35" fill="url(#gGrip)"/><rect x="2.5" y="991.5" width="3" height="3.4" fill="#6a6a6a" /><rect x="9" y="974" width="1" height="35" fill="#fbfbfb" /><rect x="321" y="974" width="9" height="35" fill="url(#gGrip)"/><rect x="324.2" y="991.5" width="3" height="3.4" fill="#6a6a6a" /><rect x="330" y="974" width="1" height="35" fill="#fbfbfb" /><rect x="483" y="974" width="9" height="35" fill="url(#gGrip)"/><rect x="486.2" y="991.5" width="3" height="3.4" fill="#6a6a6a" /><rect x="492" y="974" width="1" height="35" fill="#fbfbfb" /><rect x="313" y="974" width="1" height="35" fill="#cfcfcf" /><rect x="314" y="974" width="1" height="35" fill="#fcfcfc" /><rect x="474" y="974" width="1" height="35" fill="#cfcfcf" /><rect x="475" y="974" width="1" height="35" fill="#fcfcfc" /><rect x="703.5" y="974" width="1" height="35" fill="#cfcfcf" /><rect x="704.5" y="974" width="1" height="35" fill="#fcfcfc" /><rect x="10.8" y="980.5" width="160.9" height="24" rx="2.5" fill="#ffffff" stroke="#9c9c9c" stroke-width="1.1"/><rect x="30" y="992.2" width="101.3" height="1.7" fill="#4c4c4c" /><path d="M155.7,991 l5.4,5 l5.4,-5" fill="none" stroke="#555" stroke-width="1.4"/><rect x="180.5" y="980.5" width="124.2" height="24" rx="2.5" fill="#ffffff" stroke="#9c9c9c" stroke-width="1.1"/><rect x="195" y="992.2" width="73.7" height="1.7" fill="#4c4c4c" /><path d="M288.7,991 l5.4,5 l5.4,-5" fill="none" stroke="#555" stroke-width="1.4"/><rect x="175" y="979" width="1.2" height="27" fill="#7c7c7c" /><rect x="331" y="976.5" width="136" height="33" fill="#f1f1f1" /><rect x="334.6" y="980.0" width="12" height="11.5" fill="#0000ff" stroke="#b4b4b4" stroke-width="0.9"/><rect x="349.5" y="980.0" width="12" height="11.5" fill="#ff0000" stroke="#b4b4b4" stroke-width="0.9"/><rect x="364.5" y="980.0" width="12" height="11.5" fill="#afeeee" stroke="#b4b4b4" stroke-width="0.9"/><rect x="379.4" y="980.0" width="12" height="11.5" fill="#7fffd4" stroke="#b4b4b4" stroke-width="0.9"/><rect x="394.3" y="980.0" width="12" height="11.5" fill="#7b7bc0" stroke="#b4b4b4" stroke-width="0.9"/><rect x="409.2" y="980.0" width="12" height="11.5" fill="#ffa858" stroke="#b4b4b4" stroke-width="0.9"/><rect x="424.2" y="980.0" width="12" height="11.5" fill="#ffc0cb" stroke="#b4b4b4" stroke-width="0.9"/><rect x="439.1" y="980.0" width="12" height="11.5" fill="#e6e6fa" stroke="#b4b4b4" stroke-width="0.9"/><rect x="334.6" y="994.6" width="12" height="11.5" fill="#ffd700" stroke="#b4b4b4" stroke-width="0.9"/><rect x="349.5" y="994.6" width="12" height="11.5" fill="#ffff00" stroke="#b4b4b4" stroke-width="0.9"/><rect x="364.5" y="994.6" width="12" height="11.5" fill="#696969" stroke="#b4b4b4" stroke-width="0.9"/><rect x="379.4" y="994.6" width="12" height="11.5" fill="#32cd32" stroke="#b4b4b4" stroke-width="0.9"/><rect x="394.3" y="994.6" width="12" height="11.5" fill="#ffffe0" stroke="#b4b4b4" stroke-width="0.9"/><rect x="409.2" y="994.6" width="12" height="11.5" fill="#ff6820" stroke="#b4b4b4" stroke-width="0.9"/><rect x="424.2" y="994.6" width="12" height="11.5" fill="#98fb98" stroke="#b4b4b4" stroke-width="0.9"/><rect x="439.1" y="994.6" width="12" height="11.5" fill="#800000" stroke="#b4b4b4" stroke-width="0.9"/><rect x="348.3" y="978.4" width="14.4" height="14.4" fill="none" stroke="#555" stroke-width="0.9" stroke-dasharray="1.2,1.2"/><rect x="350" y="980.2" width="11" height="11" fill="none" stroke="#fff" stroke-width="0.8" stroke-dasharray="1.2,1.2"/><path d="M455,991 h6.6 l-3.3,3.6 z" fill="#000"/><rect x="499.0" y="986.5" width="19" height="15.3" rx="1.5" fill="#ffffff" stroke="#9fbcd8" stroke-width="1.2"/><rect x="500.2" y="987.3" width="7" height="1.8" fill="#a8c4e4" /><path d="M501.2,998 l3.2,-3.8 l3.2,1.6" fill="none" stroke="#d03030" stroke-width="1.3"/><text x="508.2" y="1000.2" font-size="12" fill="#444" textLength="7" lengthAdjust="spacingAndGlyphs" >1</text><rect x="515" y="999" width="1.3" height="1.6" fill="#555" /><rect x="532.8" y="986.5" width="19" height="15.3" rx="1.5" fill="#ffffff" stroke="#9fbcd8" stroke-width="1.2"/><rect x="534" y="987.3" width="7" height="1.8" fill="#a8c4e4" /><path d="M535.0,998 l3.2,-3.8 l3.2,1.6" fill="none" stroke="#d03030" stroke-width="1.3"/><text x="542" y="1000.2" font-size="12" fill="#444" textLength="7" lengthAdjust="spacingAndGlyphs" >2</text><rect x="548.8" y="999" width="1.3" height="1.6" fill="#555" /><rect x="566.6" y="986.5" width="19" height="15.3" rx="1.5" fill="#ffffff" stroke="#9fbcd8" stroke-width="1.2"/><rect x="567.8" y="987.3" width="7" height="1.8" fill="#a8c4e4" /><path d="M568.8,998 l3.2,-3.8 l3.2,1.6" fill="none" stroke="#d03030" stroke-width="1.3"/><text x="575.8" y="1000.2" font-size="12" fill="#444" textLength="7" lengthAdjust="spacingAndGlyphs" >3</text><rect x="582.6" y="999" width="1.3" height="1.6" fill="#555" /><rect x="600.4" y="986.5" width="19" height="15.3" rx="1.5" fill="#ffffff" stroke="#9fbcd8" stroke-width="1.2"/><rect x="601.6" y="987.3" width="7" height="1.8" fill="#a8c4e4" /><path d="M602.6,998 l3.2,-3.8 l3.2,1.6" fill="none" stroke="#d03030" stroke-width="1.3"/><text x="609.6" y="1000.2" font-size="12" fill="#444" textLength="7" lengthAdjust="spacingAndGlyphs" >4</text><rect x="616.4" y="999" width="1.3" height="1.6" fill="#555" /><rect x="634.2" y="986.5" width="19" height="15.3" rx="1.5" fill="#ffffff" stroke="#9fbcd8" stroke-width="1.2"/><rect x="635.4" y="987.3" width="7" height="1.8" fill="#a8c4e4" /><path d="M636.4,998 l3.2,-3.8 l3.2,1.6" fill="none" stroke="#d03030" stroke-width="1.3"/><text x="643.4" y="1000.2" font-size="12" fill="#444" textLength="7" lengthAdjust="spacingAndGlyphs" >5</text><rect x="650.2" y="999" width="1.3" height="1.6" fill="#555" /><rect x="668.0" y="986.5" width="19" height="15.3" rx="1.5" fill="#ffffff" stroke="#9fbcd8" stroke-width="1.2"/><rect x="669.2" y="987.3" width="7" height="1.8" fill="#a8c4e4" /><path d="M670.2,998 l3.2,-3.8 l3.2,1.6" fill="none" stroke="#d03030" stroke-width="1.3"/><text x="677.2" y="1000.2" font-size="12" fill="#444" textLength="7" lengthAdjust="spacingAndGlyphs" >6</text><rect x="684" y="999" width="1.3" height="1.6" fill="#555" /><rect x="0" y="1012.5" width="1920" height="8" fill="#3f3f3f" /><rect x="1845" y="1016" width="25" height="4" fill="#f0f0f0" /><rect x="1854" y="1016.5" width="5" height="3.5" fill="#1c8c1c" /><rect x="1875" y="1016" width="25" height="4" fill="#e4e8ee" /><rect x="1884" y="1017" width="8" height="3" fill="#8aa0c8" /><rect x="0" y="1020" width="1920" height="60" fill="#201d26" /><defs><linearGradient id="tWin" x1="0" y1="0" x2="1" y2="1"><stop offset="0" stop-color="#7de8ff"/><stop offset="1" stop-color="#1593e6"/></linearGradient><linearGradient id="tChat" x1="0" y1="0" x2="1" y2="1"><stop offset="0" stop-color="#9a8ae8"/><stop offset="1" stop-color="#5b52c4"/></linearGradient><linearGradient id="tMS" x1="0" y1="0" x2="0" y2="1"><stop offset="0" stop-color="#808080"/><stop offset="0.35" stop-color="#3c3c3c"/><stop offset="0.62" stop-color="#0a0a0a"/><stop offset="1" stop-color="#000"/></linearGradient><linearGradient id="tFold" x1="0" y1="0" x2="0" y2="1"><stop offset="0" stop-color="#ffd85a"/><stop offset="1" stop-color="#f4b21c"/></linearGradient><linearGradient id="tMoon" x1="0" y1="0" x2="1" y2="1"><stop offset="0" stop-color="#c4c8d0"/><stop offset="1" stop-color="#6c7480"/></linearGradient><linearGradient id="tEdge" x1="0" y1="0" x2="1" y2="1"><stop offset="0" stop-color="#35c1f1"/><stop offset="0.5" stop-color="#1b7fd4"/><stop offset="1" stop-color="#0c59a4"/></linearGradient><linearGradient id="tEdge2" x1="0" y1="1" x2="1" y2="0"><stop offset="0" stop-color="#2bc3d2"/><stop offset="1" stop-color="#5ee04a"/></linearGradient></defs><circle cx="36" cy="1050" r="13" fill="url(#tMoon)"/><path d="M37,1059 a4,4 0 0 1 1,-7.8 a5.2,5.2 0 0 1 9.6,1.2 a3.4,3.4 0 0 1 0.4,6.6 z" fill="#f2f2f4"/><rect x="533.8" y="1035.8" width="14" height="14" rx="1.2" fill="url(#tWin)"/><rect x="533.8" y="1051" width="14" height="14" rx="1.2" fill="url(#tWin)"/><rect x="549" y="1035.8" width="14" height="14" rx="1.2" fill="url(#tWin)"/><rect x="549" y="1051" width="14" height="14" rx="1.2" fill="url(#tWin)"/><circle cx="604.5" cy="1048.3" r="10.3" fill="#3a3740" stroke="#e8e8e8" stroke-width="3"/><path d="M597.5,1056 L591.5,1062.5" stroke="#e0e0e0" stroke-width="3.6" stroke-linecap="round"/><path d="M657.5,1036 a14,14 0 1 1 -7.5,25.8 l-6.5,2.2 l2.3,-6.3 a14,14 0 0 1 11.7,-21.7 z" fill="url(#tChat)"/><rect x="649.5" y="1044.5" width="10.5" height="10.5" rx="2" fill="#fff"/><path d="M661,1048.5 l5,-3 v9 l-5,-3 z" fill="#fff"/><rect x="711" y="1038.5" width="16.5" height="23" rx="1" fill="#fff"/><rect x="711" y="1038.5" width="16.5" height="23" rx="1" fill="none" stroke="#2b579a" stroke-width="1.3"/><rect x="719" y="1043" width="6.5" height="1.8" fill="#2b579a" /><rect x="719" y="1047" width="6.5" height="1.8" fill="#2b579a" /><rect x="719" y="1051" width="6.5" height="1.8" fill="#2b579a" /><rect x="719" y="1055" width="6.5" height="1.8" fill="#2b579a" /><path d="M700,1039.5 l17,-3.5 v28.5 l-17,-3.5 z" fill="#2b579a"/><text x="708.3" y="1055" font-size="13" fill="#ffffff" text-anchor="middle" font-weight="bold">W</text><rect x="753.8" y="1035" width="30" height="29.5" rx="3.5" fill="url(#tMS)"/><path d="M760,1063 l4.500,0 l1.44,-9 l-4.500,0 z" fill="#f58a1f"/><path d="M765.5,1063 l4.500,0 l2.64,-16.5 l-4.500,0 z" fill="#f58a1f"/><path d="M771,1063 l4.500,0 l4.24,-26.5 l-4.500,0 z" fill="#f58a1f"/><path d="M809,1040 a1.5,1.5 0 0 1 1.5,-1.5 h9 l3,3 h15.5 a1.5,1.5 0 0 1 1.5,1.5 v19 a1.5,1.5 0 0 1 -1.5,1.5 h-27.5 a1.5,1.5 0 0 1 -1.5,-1.5 z" fill="#e8a317"/><rect x="809" y="1042.5" width="30.5" height="21" rx="1.5" fill="url(#tFold)"/><path d="M815,1063.5 v-4.5 a2,2 0 0 1 2,-2 h14.5 a2,2 0 0 1 2,2 v4.5 z" fill="#1e88e5"/><rect x="819" y="1059.5" width="10.500" height="1.6" fill="#0d5cab"/><path d="M878.7,1050.0 L865.9,1042.6 A14.8,14.8 0 0 1 891.5,1042.6 z" fill="#ea4335"/><path d="M878.7,1050.0 L891.5,1042.6 A14.8,14.8 0 0 1 878.7,1064.8 z" fill="#fbc116"/><path d="M878.7,1050.0 L878.7,1064.8 A14.8,14.8 0 0 1 865.9,1042.6 z" fill="#34a853"/><circle cx="878.7" cy="1050" r="6.7" fill="#fff"/><circle cx="878.7" cy="1050" r="5.3" fill="#4285f4"/><circle cx="886.3" cy="1042" r="6" fill="#f26b1d"/><text x="886.3" y="1044.8" font-size="8" fill="#ffffff" text-anchor="middle" font-weight="bold">N</text><rect x="931" y="1038.5" width="17" height="23" rx="1" fill="#fff"/><rect x="931" y="1038.5" width="17" height="23" rx="1" fill="none" stroke="#d04423" stroke-width="1.3"/><circle cx="941.5" cy="1046" r="4" fill="none" stroke="#d04423" stroke-width="1.6"/><rect x="937.5" y="1053" width="8" height="1.8" fill="#d04423" /><rect x="937.5" y="1056.5" width="8" height="1.8" fill="#d04423" /><path d="M920,1039.5 l17,-3.5 v28.5 l-17,-3.5 z" fill="#d04423"/><text x="928.5" y="1055" font-size="13" fill="#ffffff" text-anchor="middle" font-weight="bold">P</text><path d="M988.5,1035.5 q2.5,0 3.2,2.2 l6.3,19.3 h-19 l6.3,-19.3 q0.7,-2.2 3.2,-2.2 z" fill="#ff8a00"/><path d="M984.6,1042.2 h7.8 l1.6,4.8 h-11 z M981.7,1051.2 h13.600 l1.2,3.800 h-16 z" fill="#f4f4f4"/><path d="M977.5,1056.5 h22 l1.8,6 a1.5,1.5 0 0 1 -1.5,2 h-22.600 a1.5,1.5 0 0 1 -1.5,-2 z" fill="#ff8a00"/><circle cx="1043.7" cy="1050" r="14.8" fill="url(#tEdge)"/><path d="M1029.200,1048 a14.800,14.800 0 0 1 29.200,-1.500 q0.600,6.500 -6.500,7 q-5.500,0 -5,-3.500 q1,-4.500 -3.500,-6.500 q-8,-2.500 -14.200,4.500 z" fill="url(#tEdge2)"/><path d="M1046.500,1050.500 q-2,5.500 5,6.200 q4,0 6.500,-2 q-3,8 -11,9.800 q-9,-2 -9.500,-10 q1,-6.500 9,-4 z" fill="#0c4f95" opacity="0.85"/><rect x="1096" y="1038.500" width="16.500" height="23" rx="1" fill="#fff"/><rect x="1096" y="1038.500" width="16.500" height="23" rx="1" fill="none" stroke="#3955a3" stroke-width="1.300"/><rect x="1104.500" y="1042" width="5" height="5" fill="none" stroke="#3955a3" stroke-width="1.200" transform="rotate(45 1107 1044.500)"/><circle cx="1105" cy="1056" r="2.600" fill="none" stroke="#3955a3" stroke-width="1.200"/><rect x="1102.500" y="1048.500" width="5" height="4" fill="none" stroke="#3955a3" stroke-width="1.200"/><path d="M1085,1039.500 l17,-3.500 v28.500 l-17,-3.500 z" fill="#3955a3"/><text x="1093.5" y="1055" font-size="13" fill="#ffffff" text-anchor="middle" font-weight="bold">V</text><rect x="1151" y="1038.500" width="16.500" height="23" rx="1" fill="#fff"/><rect x="1151" y="1038.500" width="16.500" height="23" rx="1" fill="none" stroke="#1d6f42" stroke-width="1.300"/><rect x="1158.5" y="1042.5" width="3" height="2.2" fill="#1d6f42" /><rect x="1162.5" y="1042.5" width="3.2" height="2.2" fill="#1d6f42" /><rect x="1158.5" y="1046.5" width="3" height="2.2" fill="#1d6f42" /><rect x="1162.5" y="1046.5" width="3.2" height="2.2" fill="#1d6f42" /><rect x="1158.5" y="1050.5" width="3" height="2.2" fill="#1d6f42" /><rect x="1162.5" y="1050.5" width="3.2" height="2.2" fill="#1d6f42" /><rect x="1158.5" y="1054.5" width="3" height="2.2" fill="#1d6f42" /><rect x="1162.5" y="1054.5" width="3.2" height="2.2" fill="#1d6f42" /><path d="M1140,1039.500 l17,-3.500 v28.500 l-17,-3.500 z" fill="#1d6f42"/><text x="1148.5" y="1055" font-size="13" fill="#ffffff" text-anchor="middle" font-weight="bold">X</text><rect x="1150" y="1070" width="8" height="3.500" rx="1.700" fill="#9b9b9b"/><path d="M1208.7,1050.0 L1195.9,1042.6 A14.8,14.8 0 0 1 1221.5,1042.6 z" fill="#ea4335"/><path d="M1208.7,1050.0 L1221.5,1042.6 A14.8,14.8 0 0 1 1208.7,1064.8 z" fill="#fbc116"/><path d="M1208.7,1050.0 L1208.7,1064.8 A14.8,14.8 0 0 1 1195.9,1042.6 z" fill="#34a853"/><circle cx="1208.7" cy="1050" r="6.7" fill="#fff"/><circle cx="1208.7" cy="1050" r="5.3" fill="#4285f4"/><rect x="1252" y="1035" width="23" height="30" rx="2.500" fill="#6f89a8"/><rect x="1255" y="1038" width="17" height="5.500" fill="#4fd6f4"/><rect x="1255" y="1046.5" width="4.6" height="4.2" fill="#d6dde6" /><rect x="1261" y="1046.5" width="4.6" height="4.2" fill="#d6dde6" /><rect x="1267" y="1046.5" width="4.6" height="4.2" fill="#d6dde6" /><rect x="1255" y="1052" width="4.6" height="4.2" fill="#d6dde6" /><rect x="1261" y="1052" width="4.6" height="4.2" fill="#d6dde6" /><rect x="1267" y="1052" width="4.6" height="4.2" fill="#1f5fa8" /><rect x="1255" y="1057.5" width="4.6" height="4.2" fill="#d6dde6" /><rect x="1261" y="1057.5" width="4.6" height="4.2" fill="#d6dde6" /><rect x="1267" y="1057.5" width="4.6" height="4.2" fill="#1f5fa8" /><rect x="1267" y="1052" width="4.6" height="9.7" fill="#1f5fa8" /><rect x="1304" y="1035" width="30" height="30" fill="#007f80" /><path d="M1318.200,1038 h1.600 v2.200 h2 v1.600 h-2 v2.500 q7.500,-3.500 9.500,2.500 q1,4.500 -4,8.500 v4.500 h-13.400 v-4.500 q-5,-4 -4,-8.500 q2,-6 9.500,-2.500 v-2.500 h-2 v-1.600 h2 z" fill="#ffffff" stroke="#101010" stroke-width="0.900"/><path d="M1312,1056.500 q7,-2.200 14,0 M1312,1059 q7,-2 14,0" fill="none" stroke="#101010" stroke-width="0.900"/><rect x="1349.500" y="1025" width="49" height="54" rx="4.500" fill="#35323b" stroke="#413e47" stroke-width="1"/><rect x="1358.8" y="1035" width="30" height="29.5" rx="3.5" fill="url(#tMS)"/><path d="M1365,1063 l4.500,0 l1.44,-9 l-4.500,0 z" fill="#f58a1f"/><path d="M1370.5,1063 l4.500,0 l2.64,-16.5 l-4.500,0 z" fill="#f58a1f"/><path d="M1376,1063 l4.500,0 l4.24,-26.5 l-4.500,0 z" fill="#f58a1f"/><rect x="1364.500" y="1070" width="19.200" height="3.500" rx="1.700" fill="#4cc2ff"/><path d="M1658.500,1054 l8,-8 l8,8" fill="none" stroke="#f2f2f2" stroke-width="1.500"/><path d="M1690,1056 a4,4 0 0 1 -0.500,-8 a5,5 0 0 1 9.500,-1.500 a4.200,4.200 0 0 1 2.500,7.500 z" fill="#8c8c90"/><path d="M1689.500,1056.500 a3.800,3.800 0 0 1 0.300,-7.600 a4.600,4.600 0 0 1 8.200,0.600 q1,0.200 2,1.500 l-3,5.500 z" fill="#ececee"/><circle cx="1700.500" cy="1054.700" r="5.500" fill="#e81123"/><path d="M1698.300,1052.500 l4.400,4.400 M1702.700,1052.500 l-4.400,4.400" stroke="#fff" stroke-width="1.400"/><g fill="none" stroke="#f4f4f4" stroke-width="1.600" stroke-linecap="round"><path d="M1721.800,1047.500 a12.500,12.500 0 0 1 18,0"/><path d="M1724.800,1050.800 a8.400,8.400 0 0 1 12,0"/><path d="M1727.600,1054 a4.400,4.400 0 0 1 6.400,0"/></g><circle cx="1730.800" cy="1056.300" r="1.500" fill="#f4f4f4"/><path d="M1752,1046.500 h3.500 l4.500,-4 v15 l-4.500,-4 h-3.500 z" fill="none" stroke="#f4f4f4" stroke-width="1.400" stroke-linejoin="round"/><g fill="none" stroke-linecap="round"><path d="M1763,1046.500 a5,5 0 0 1 0,7" stroke="#f4f4f4" stroke-width="1.400"/><path d="M1765.800,1044 a8.500,8.500 0 0 1 0,12" stroke="#9a9a9e" stroke-width="1.400"/><path d="M1768.600,1041.500 a12,12 0 0 1 0,17" stroke="#5c5c62" stroke-width="1.400"/></g><rect x="1786.500" y="1044.500" width="12.500" height="11" rx="2.200" fill="none" stroke="#f4f4f4" stroke-width="1.600"/><rect x="1799.500" y="1047.800" width="2" height="4.500" rx="0.800" fill="#f4f4f4"/><rect x="1788.500" y="1049" width="3.500" height="5" fill="#f4f4f4"/><path d="M1783,1041 v3 M1786.500,1041 v3" stroke="#f4f4f4" stroke-width="1.400"/><path d="M1781.500,1044 h6.500 v2.500 a3.200,3.200 0 0 1 -6.500,0 z" fill="#f4f4f4"/><path d="M1784.700,1049 v7" stroke="#f4f4f4" stroke-width="1.400"/><text x="1895.5" y="1044.8" font-size="14" fill="#ffffff" textLength="33.5" lengthAdjust="spacingAndGlyphs" text-anchor="end" >14:48</text><text x="1895.5" y="1065" font-size="14" fill="#ffffff" textLength="74.5" lengthAdjust="spacingAndGlyphs" text-anchor="end" >27/10/2022</text></svg></body></html>
